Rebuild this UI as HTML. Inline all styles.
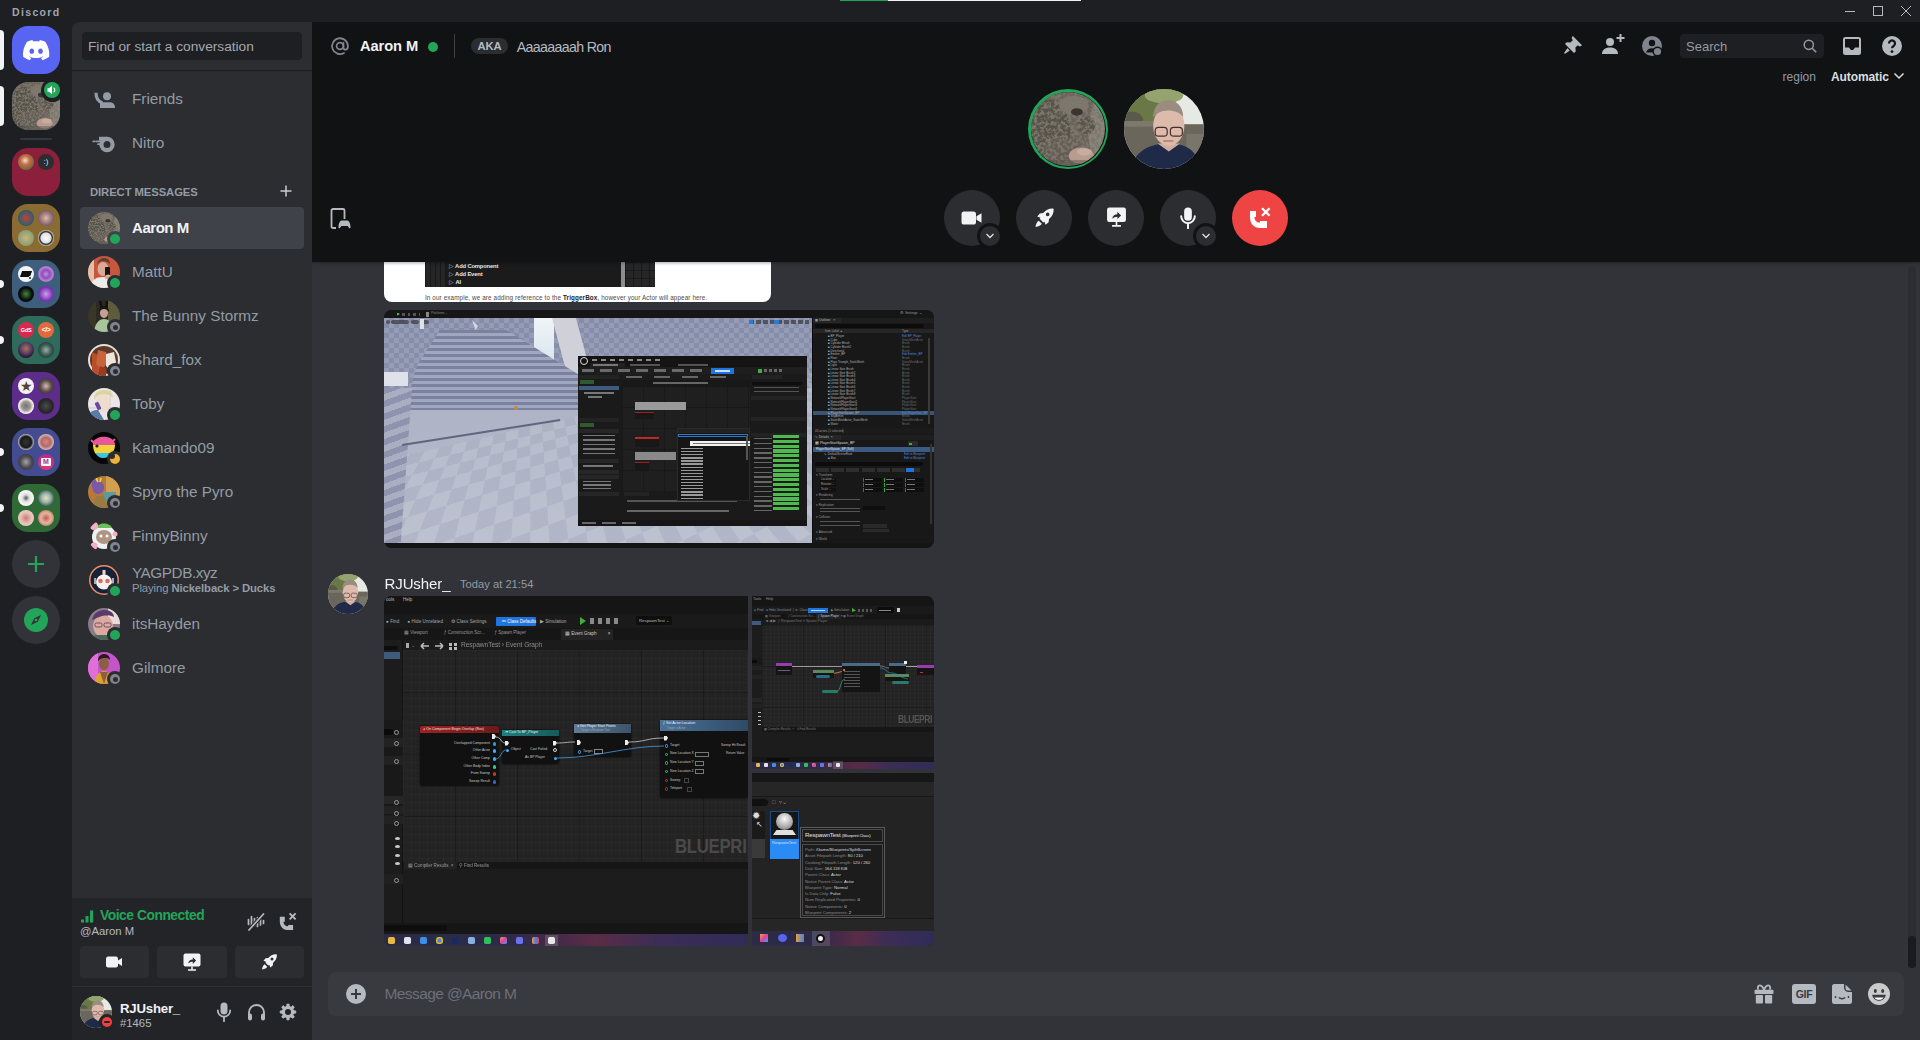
<!DOCTYPE html>
<html><head><meta charset="utf-8">
<style>
*{box-sizing:border-box;margin:0;padding:0}
html,body{width:1920px;height:1040px;overflow:hidden}
body{background:#1e1f22;position:relative;font-family:"Liberation Sans",sans-serif;color:#dbdee1}
.a{position:absolute}
.t{position:absolute;white-space:nowrap;line-height:1}
.srv{position:absolute;left:12px;width:48px;height:48px;border-radius:16px;overflow:hidden}
.mini{position:absolute;width:16px;height:16px;border-radius:50%}
.pill{position:absolute;left:0;width:4px;background:#f2f3f5;border-radius:0 4px 4px 0}
.dm{position:absolute;left:80px;width:224px;height:42px;border-radius:4px}
.av{position:absolute;left:8px;top:5px;width:32px;height:32px;border-radius:50%}
.st{position:absolute;left:25px;top:22px;width:16px;height:16px;border-radius:50%;background:#2b2d31}
.st i{position:absolute;left:3px;top:3px;width:10px;height:10px;border-radius:50%;display:block}
.on i{background:#23a559}
.off i{background:#80848e}
.off i:after{content:"";position:absolute;left:2.5px;top:2.5px;width:5px;height:5px;border-radius:50%;background:#2b2d31}
.dmn{position:absolute;left:52px;top:13px;font-size:16px;color:#949ba4;white-space:nowrap;line-height:1}
.cbtn{position:absolute;top:190px;width:56px;height:56px;border-radius:50%;background:#2b2d31}
</style></head>
<body>
<svg width="0" height="0" style="position:absolute">
 <defs>
  <filter id="tex" x="0" y="0" width="100%" height="100%">
    <feTurbulence type="fractalNoise" baseFrequency="0.22" numOctaves="3" seed="7" result="n"/>
    <feColorMatrix in="n" type="matrix" values="0 0 0 0 0.2  0 0 0 0 0.18  0 0 0 0 0.15  0 0 0 4.5 -1.9" result="m"/>
    <feComposite in="m" in2="SourceGraphic" operator="in" result="c"/>
    <feMerge><feMergeNode in="SourceGraphic"/><feMergeNode in="c"/></feMerge>
  </filter>
  <symbol id="av1" viewBox="0 0 100 100">
    <g filter="url(#tex)">
    <rect width="100" height="100" fill="#6a645a"/>
    <ellipse cx="25" cy="55" rx="28" ry="45" fill="#57524a"/>
    <ellipse cx="90" cy="55" rx="12" ry="40" fill="#8a857b"/>
    <ellipse cx="58" cy="18" rx="20" ry="13" fill="#7e786d"/>
    <ellipse cx="75" cy="45" rx="12" ry="12" fill="#5a544b"/>
    <ellipse cx="40" cy="78" rx="26" ry="18" fill="#635d54"/>
    </g>
    <ellipse cx="62" cy="27" rx="8" ry="5" fill="#3a3530"/>
    <ellipse cx="68" cy="86" rx="17" ry="11" fill="#b89c90"/>
    <ellipse cx="72" cy="81" rx="10" ry="5" fill="#c8ac9e"/>
    <rect x="0" y="92" width="100" height="8" fill="#5a554e" opacity=".5"/>
  </symbol>
  <symbol id="av2" viewBox="0 0 100 100">
    <rect width="100" height="100" fill="#e6e9e4"/>
    <path d="M0 0h72c-2 12-10 22-22 26L32 45 0 52z" fill="#74824f"/>
    <ellipse cx="25" cy="25" rx="30" ry="22" fill="#6a7848"/>
    <ellipse cx="50" cy="8" rx="24" ry="10" fill="#95a36e"/>
    <ellipse cx="10" cy="40" rx="14" ry="12" fill="#5a5a4a"/>
    <rect x="0" y="44" width="100" height="45" fill="#6b665b"/>
    <rect x="0" y="40" width="40" height="7" fill="#7e796d"/>
    <rect x="78" y="56" width="22" height="30" fill="#7a756a"/>
    <path d="M8 100c6-22 22-32 48-32s36 12 40 32z" fill="#1f2a48"/>
    <path d="M42 68l14 10 14-10" fill="#d0ae9e"/>
    <ellipse cx="56" cy="46" rx="19.5" ry="25" fill="#dcbaac"/>
    <path d="M36 36c1-14 8-22 19-22s19 8 19 21c-4-5-10-8-19-8s-15 4-19 9z" fill="#9a8c7e"/>
    <rect x="39" y="48" width="15" height="11" rx="4" fill="none" stroke="#4a2e2c" stroke-width="1.5"/>
    <rect x="58" y="48" width="15" height="11" rx="4" fill="none" stroke="#4a2e2c" stroke-width="1.5"/>
    <path d="M49 65h13" stroke="#b07a70" stroke-width="1.6"/>
  </symbol>
 </defs>
</svg>

<!-- TITLE BAR -->
<div class="a" style="left:0;top:0;width:1920px;height:22px;background:#1e1f22">
  <div class="t" style="left:12px;top:7px;font-size:10.5px;font-weight:bold;color:#a0a5ad;letter-spacing:1.35px">Discord</div>
  <div class="a" style="left:840px;top:0;width:48px;height:1px;background:#23a559"></div>
  <div class="a" style="left:888px;top:0;width:193px;height:1px;background:#f2f3f5"></div>
  <svg class="a" style="left:1840px;top:0" width="80" height="22" viewBox="0 0 80 22">
    <line x1="5" y1="11.5" x2="15" y2="11.5" stroke="#b5bac1" stroke-width="1"/>
    <rect x="33.5" y="6.5" width="9" height="9" fill="none" stroke="#b5bac1" stroke-width="1"/>
    <path d="M61 6 L71 16 M71 6 L61 16" stroke="#b5bac1" stroke-width="1"/>
  </svg>
</div>

<!-- SERVER RAIL -->
<div id="rail" class="a" style="left:0;top:22px;width:72px;height:1018px;background:#1e1f22">
  <div class="pill" style="top:8px;height:40px"></div>
  <div class="srv" style="top:4px;background:#5865f2">
    <svg class="a" style="left:9.7px;top:10px" width="28.3" height="28.3" viewBox="0 0 24 24"><path fill="#fff" d="M19.73 4.87a18.2 18.2 0 0 0-4.6-1.44c-.21.4-.4.8-.58 1.21-1.69-.25-3.4-.25-5.1 0-.18-.41-.37-.82-.59-1.2-1.6.27-3.14.75-4.6 1.43A19.04 19.04 0 0 0 .96 17.7a18.43 18.43 0 0 0 5.63 2.87c.46-.62.86-1.28 1.2-1.98-.65-.25-1.29-.55-1.9-.92.17-.12.32-.24.47-.37 3.58 1.7 7.7 1.7 11.28 0l.46.37c-.6.36-1.25.67-1.9.92.35.7.75 1.35 1.2 1.98 2.03-.63 3.94-1.6 5.64-2.87.47-4.87-.78-9.09-3.3-12.83ZM8.3 15.12c-1.1 0-2-1.02-2-2.27 0-1.24.88-2.26 2-2.26s2.02 1.02 2 2.26c0 1.25-.89 2.27-2 2.27Zm7.4 0c-1.1 0-2-1.02-2-2.27 0-1.24.88-2.26 2-2.26s2.02 1.02 2 2.26c0 1.25-.88 2.27-2 2.27Z"/></svg>
  </div>
  <div class="pill" style="top:64px;height:40px"></div>
  <div class="srv" style="top:60px"><svg width="48" height="48"><use href="#av1"/></svg></div>
  <div class="a" style="left:40.5px;top:56.5px;width:23px;height:23px;border-radius:50%;background:#1e1f22"></div>
  <div class="a" style="left:44px;top:60px;width:16px;height:16px;border-radius:50%;background:#23a559">
    <svg class="a" style="left:2px;top:2px" width="12" height="12" viewBox="0 0 12 12"><path fill="#fff" d="M1.5 4.2h1.6L6 1.8v8.4L3.1 7.8H1.5z"/><path d="M7.6 3.8a2.6 2.6 0 0 1 0 4.4" stroke="#fff" stroke-width="1.1" fill="none"/></svg>
  </div>
  <div class="a" style="left:20px;top:116px;width:32px;height:2px;border-radius:1px;background:#35363c"></div>

  <!-- folder red -->
  <div class="srv" style="top:126px;background:#8b1f3c">
    <div class="mini" style="left:6px;top:6px;background:radial-gradient(circle at 45% 40%,#e9e2d8 0%,#c96a3e 35%,#566b45 80%)"></div>
    <div class="mini" style="left:26px;top:6px;background:#2b2d31;color:#dbdee1;font-size:8px;text-align:center;line-height:16px">:)</div>
  </div>
  <!-- folder gold -->
  <div class="srv" style="top:182px;background:#8a6c33">
    <div class="mini" style="left:6px;top:6px;background:radial-gradient(circle at 50% 50%,#c0413a 0%,#3a5d6a 60%,#1f3844 100%)"></div>
    <div class="mini" style="left:26px;top:6px;background:radial-gradient(circle at 50% 50%,#e0b9a5 0%,#7a5a6a 70%,#a89ab8 100%)"></div>
    <div class="mini" style="left:6px;top:26px;background:radial-gradient(circle at 50% 50%,#c6b77a 0%,#8a9d75 70%,#6b8c6a 100%)"></div>
    <div class="mini" style="left:26px;top:26px;background:radial-gradient(circle,#fff 0%,#ddd 45%,#222 55%,#fff 75%)"></div>
  </div>
  <!-- folder blue -->
  <div class="pill" style="top:258px;height:8px"></div>
  <div class="srv" style="top:238px;background:#3e5e7d">
    <div class="mini" style="left:6px;top:6px;background:#f5f5f5"><div class="a" style="left:3px;top:5px;width:10px;height:6px;background:#111;transform:skewX(-20deg)"></div><div class="a" style="left:10px;top:10px;width:4px;height:4px;border-radius:50%;background:#111;border:1px solid #fff"></div></div>
    <div class="mini" style="left:26px;top:6px;background:radial-gradient(circle,#c98fe0 0%,#8d4fb6 35%,#b77fd6 60%,#7a3ea6 100%)"></div>
    <div class="mini" style="left:6px;top:26px;background:radial-gradient(circle,#3c8a3a 0%,#0b0b0b 55%)"></div>
    <div class="mini" style="left:26px;top:26px;background:radial-gradient(circle,#c9a0e6 0%,#7b33b5 60%,#5c2390 100%)"></div>
  </div>
  <!-- folder teal -->
  <div class="pill" style="top:314px;height:8px"></div>
  <div class="srv" style="top:294px;background:#2f6b5b">
    <div class="mini" style="left:6px;top:6px;background:#d72a4e;color:#fff;font-size:5.5px;font-weight:bold;text-align:center;line-height:16px;letter-spacing:-0.2px">GdS</div>
    <div class="mini" style="left:26px;top:6px;background:#e4673d;color:#fff;font-size:7px;font-weight:bold;text-align:center;line-height:16px;letter-spacing:-0.6px">&lt;/&gt;</div>
    <div class="mini" style="left:6px;top:26px;background:radial-gradient(circle at 50% 40%,#a87850 0%,#5a3a6a 45%,#151515 80%)"></div>
    <div class="mini" style="left:26px;top:26px;background:radial-gradient(circle,#9ab0aa 0%,#3a5750 50%,#1a2a28 100%)"></div>
  </div>
  <!-- folder purple -->
  <div class="srv" style="top:350px;background:#5d2d8c">
    <div class="mini" style="left:6px;top:6px;background:#f3f3f3;color:#5a4034;font-size:14px;text-align:center;line-height:16px">&#9733;</div>
    <div class="mini" style="left:26px;top:6px;background:radial-gradient(circle,#d9b9b2 0%,#5a4a4e 50%,#2a2226 100%)"></div>
    <div class="mini" style="left:6px;top:26px;background:radial-gradient(circle,#5d7a8a 0%,#a8988a 40%,#f4f4f4 65%)"></div>
    <div class="mini" style="left:26px;top:26px;background:radial-gradient(circle,#4a4a4a 0%,#262626 60%)"></div>
  </div>
  <!-- folder indigo -->
  <div class="pill" style="top:426px;height:8px"></div>
  <div class="srv" style="top:406px;background:#434c91">
    <div class="mini" style="left:6px;top:6px;background:radial-gradient(circle,#333 0%,#1a1a1a 50%,#bbb 70%,#111 85%)"></div>
    <div class="mini" style="left:26px;top:6px;background:radial-gradient(circle,#d98a80 0%,#b06a6a 40%,#e7d3cf 80%)"></div>
    <div class="mini" style="left:6px;top:26px;background:radial-gradient(circle,#a9a5a8 0%,#4e4a52 50%,#2c2a32 100%)"></div>
    <div class="mini" style="left:26px;top:26px;background:linear-gradient(180deg,#b02a9a,#e03a6a);"><div class="a" style="left:3px;top:4px;width:10px;height:8px;background:#fff;border-radius:1px;color:#b02a7a;font-size:7px;font-weight:bold;line-height:8px;text-align:center">M</div></div>
  </div>
  <!-- folder green -->
  <div class="pill" style="top:482px;height:8px"></div>
  <div class="srv" style="top:462px;background:#2f6a36">
    <div class="mini" style="left:6px;top:6px;background:radial-gradient(circle,#555 0%,#ddd 30%,#f6f6f6 60%)"></div>
    <div class="mini" style="left:26px;top:6px;background:radial-gradient(circle,#e8e0b8 0%,#9bb7a8 40%,#2e3f4e 85%)"></div>
    <div class="mini" style="left:6px;top:26px;background:radial-gradient(circle,#c77a78 0%,#e6bdb2 45%,#efe0d8 100%)"></div>
    <div class="mini" style="left:26px;top:26px;background:radial-gradient(circle,#c25a55 0%,#e8b6a0 45%,#8a5a40 100%)"></div>
  </div>
  <!-- add -->
  <div class="srv" style="top:518px;background:#313338;border-radius:50%">
    <svg class="a" style="left:12px;top:12px" width="24" height="24" viewBox="0 0 24 24"><path d="M12 4v16M4 12h16" stroke="#23a559" stroke-width="2.2"/></svg>
  </div>
  <!-- explore -->
  <div class="srv" style="top:574px;background:#313338;border-radius:50%">
    <div class="a" style="left:12px;top:12px;width:24px;height:24px;border-radius:50%;background:#23a559"></div>
    <svg class="a" style="left:12px;top:12px" width="24" height="24" viewBox="0 0 24 24"><path d="M17 7l-3.2 6.8L7 17l3.2-6.8z" fill="#313338"/><circle cx="12" cy="12" r="1.3" fill="#23a559"/></svg>
  </div>
</div>

<!-- DM SIDEBAR -->
<div id="side" class="a" style="left:72px;top:22px;width:240px;height:1018px;background:#2b2d31;border-top-left-radius:8px;overflow:hidden">
<div class="a" style="left:0;top:0;width:240px;height:48px;box-shadow:0 1px 0 rgba(2,2,2,.2),0 1.5px 0 rgba(6,6,7,.05),0 2px 0 rgba(2,2,2,.05)"></div>
<div class="a" style="left:10px;top:10px;width:220px;height:28px;border-radius:4px;background:#1e1f22"><div class="t" style="left:6px;top:8px;font-size:13.7px;color:#a4a8ae">Find or start a conversation</div></div>
<svg class="a" style="left:22px;top:70px" width="22" height="18" viewBox="0 0 22 18"><path d="M2 0.8C2 6.5 4 9.6 8.5 10.8" fill="none" stroke="#949ba4" stroke-width="3.2"/><circle cx="13" cy="4.2" r="4" fill="#949ba4"/><path d="M6 10.3h10c2.8 0 5 2.2 5 5V16H6z" fill="#949ba4"/></svg>
<div class="t" style="left:60px;top:69px;font-size:15.3px;color:#949ba4">Friends</div>
<svg class="a" style="left:92px;top:135px;left:20px;top:113px" width="26" height="20" viewBox="0 0 26 20"><circle cx="15" cy="9.5" r="5.6" fill="none" stroke="#949ba4" stroke-width="4.2"/><path d="M7 1.8h8v3.8H7z" fill="#949ba4"/><path d="M1.2 6.3h1.6M4.5 6.3h4M6 9.2h3" stroke="#949ba4" stroke-width="1.7" stroke-linecap="round"/></svg>
<div class="t" style="left:60px;top:113px;font-size:15.3px;color:#949ba4;font-weight:400">Nitro</div>
<div class="t" style="left:18px;top:164.5px;font-size:11.3px;font-weight:bold;color:#949ba4;letter-spacing:-0.1px">DIRECT MESSAGES</div>
<svg class="a" style="left:208px;top:163px" width="12" height="12" viewBox="0 0 12 12"><path d="M6 0.5v11M0.5 6h11" stroke="#c9cdd3" stroke-width="1.5"/></svg>
<div class="dm" style="left:8px;top:185px;background:#404249"><svg class="av" width="32" height="32"><use href="#av1"/></svg><div class="a" style="left:27px;top:24px;width:16px;height:16px;border-radius:50%;background:#404249"><div class="a" style="left:3px;top:3px;width:10px;height:10px;border-radius:50%;background:#23a559"></div></div><div class="t" style="left:52px;top:12.5px;font-size:15px;color:#f2f3f5;font-weight:bold;letter-spacing:-0.45px">Aaron M</div></div>
<div class="dm" style="left:8px;top:229px;"><svg class="av" width="32" height="32" viewBox="0 0 32 32"><rect width="32" height="32" fill="#c4573d"/><rect x="0" y="0" width="6" height="32" fill="#e0c0a8"/><path d="M2 32c1-8 6-11 13-11s11 4 12 11z" fill="#ececea"/><ellipse cx="15" cy="13" rx="5.5" ry="7" fill="#d9aa98"/><path d="M9 9c1-5 4-7 7-7s6 2 6 6c-2-2-4-3-7-3s-5 2-6 4z" fill="#5a4036"/><rect x="17" y="11" width="5" height="9" rx="1" fill="#151515"/><ellipse cx="20" cy="21" rx="3" ry="2.5" fill="#d9aa98"/></svg><div class="a" style="left:27px;top:24px;width:16px;height:16px;border-radius:50%;background:#2b2d31"><div class="a" style="left:3px;top:3px;width:10px;height:10px;border-radius:50%;background:#23a559"></div></div><div class="t" style="left:52px;top:12.5px;font-size:15.3px;color:#949ba4;font-weight:400;">MattU</div></div>
<div class="dm" style="left:8px;top:273px;"><svg class="av" width="32" height="32" viewBox="0 0 32 32"><rect width="32" height="32" fill="#2c2a22"/><rect x="20" y="0" width="12" height="32" fill="#5e5c3c"/><rect x="0" y="0" width="8" height="32" fill="#3a3628"/><path d="M12 1l2 8M19 1l-1 8" stroke="#111" stroke-width="2.5"/><ellipse cx="16" cy="13" rx="4" ry="5" fill="#c8a090"/><path d="M11 12c0-4 2-6 5-6s5 2 5 6c-1-2-3-3-5-3s-4 1-5 3z" fill="#1a1412"/><path d="M6 32c1-9 5-13 10-13s9 4 10 13z" fill="#a8c49a"/></svg><div class="a" style="left:27px;top:24px;width:16px;height:16px;border-radius:50%;background:#2b2d31"><div class="a" style="left:3px;top:3px;width:10px;height:10px;border-radius:50%;background:#80848e"></div><div class="a" style="left:5.5px;top:5.5px;width:5px;height:5px;border-radius:50%;background:#2b2d31"></div></div><div class="t" style="left:52px;top:12.5px;font-size:15.3px;color:#949ba4;font-weight:400;">The Bunny Stormz</div></div>
<div class="dm" style="left:8px;top:317px;"><svg class="av" width="32" height="32" viewBox="0 0 32 32"><rect width="32" height="32" fill="#e6e0d8"/><circle cx="16" cy="16" r="14" fill="#5a3a2a"/><path d="M4 8l8 4 4 20H4z" fill="#b84e2a"/><path d="M10 6l8 2 2 10-6 8-6-6z" fill="#c8643a"/><path d="M18 10l8-2 2 10-4 10-6-6z" fill="#ece6dc"/><path d="M12 22l6 2 0 8h-8z" fill="#9a3a20"/></svg><div class="a" style="left:27px;top:24px;width:16px;height:16px;border-radius:50%;background:#2b2d31"><div class="a" style="left:3px;top:3px;width:10px;height:10px;border-radius:50%;background:#80848e"></div><div class="a" style="left:5.5px;top:5.5px;width:5px;height:5px;border-radius:50%;background:#2b2d31"></div></div><div class="t" style="left:52px;top:12.5px;font-size:15.3px;color:#949ba4;font-weight:400;">Shard_fox</div></div>
<div class="dm" style="left:8px;top:361px;"><svg class="av" width="32" height="32" viewBox="0 0 32 32"><rect width="32" height="32" fill="#eae6e8"/><path d="M22 0v32M0 20h32" stroke="#c8c0c8" stroke-width=".8"/><path d="M0 32c0-8 4-10 10-10l6 10z" fill="#5a7aaa"/><ellipse cx="15" cy="15" rx="7" ry="9" fill="#eedccc"/><path d="M6 12c0-7 4-10 10-10s9 3 9 8c-3-3-6-4-10-4s-7 3-9 6z" fill="#dcd49c"/><rect x="8" y="14" width="4" height="8" rx="1" transform="rotate(-25 10 18)" fill="#6a4aa0"/></svg><div class="a" style="left:27px;top:24px;width:16px;height:16px;border-radius:50%;background:#2b2d31"><div class="a" style="left:3px;top:3px;width:10px;height:10px;border-radius:50%;background:#23a559"></div></div><div class="t" style="left:52px;top:12.5px;font-size:15.3px;color:#949ba4;font-weight:400;">Toby</div></div>
<div class="dm" style="left:8px;top:405px;"><svg class="av" width="32" height="32" viewBox="0 0 32 32"><rect width="32" height="32" fill="#050505"/><path d="M5 10c2-4 8-6 14-5 5 1 8 4 8 8H5z" fill="#e8589a"/><path d="M5 13h22c0 3-1 6-3 8H7c-1-2-2-5-2-8z" fill="#f2d43a"/><path d="M7 21h17c-2 3-5 5-9 5-3 0-6-2-8-5z" fill="#3cc4e2"/><circle cx="9" cy="14" r="1.6" fill="#222"/><path d="M3 8l3 3M27 7l-3 3" stroke="#e8589a" stroke-width="2"/></svg><div class="a" style="left:27px;top:24px;width:16px;height:16px;border-radius:50%;background:#2b2d31"><div class="a" style="left:3px;top:3px;width:10px;height:10px;border-radius:50%;background:#f0b232"></div><div class="a" style="left:2px;top:2px;width:6px;height:6px;border-radius:50%;background:#2b2d31"></div></div><div class="t" style="left:52px;top:12.5px;font-size:15.3px;color:#949ba4;font-weight:400;">Kamando09</div></div>
<div class="dm" style="left:8px;top:449px;"><svg class="av" width="32" height="32" viewBox="0 0 32 32"><rect width="32" height="32" fill="#b8783a"/><rect x="18" y="0" width="14" height="20" fill="#d0a050"/><path d="M4 4c4-2 10 0 12 6 1 4-2 8-6 8-4 0-7-4-6-14z" fill="#7a5aa8"/><path d="M8 2l2 4M13 2l-1 4" stroke="#e8d040" stroke-width="1.8"/><path d="M16 16h12v10h-12z" fill="#5a9aa0"/><path d="M4 32l4-12h8l4 12z" fill="#9a7a40"/></svg><div class="a" style="left:27px;top:24px;width:16px;height:16px;border-radius:50%;background:#2b2d31"><div class="a" style="left:3px;top:3px;width:10px;height:10px;border-radius:50%;background:#80848e"></div><div class="a" style="left:5.5px;top:5.5px;width:5px;height:5px;border-radius:50%;background:#2b2d31"></div></div><div class="t" style="left:52px;top:12.5px;font-size:15.3px;color:#949ba4;font-weight:400;">Spyro the Pyro</div></div>
<div class="dm" style="left:8px;top:493px;"><svg class="av" width="32" height="32" viewBox="0 0 32 32"><rect width="32" height="32" fill="#2b2d31"/><circle cx="16" cy="17" r="12" fill="#eef2f2"/><path d="M8 8c2-6 14-6 16 0z" fill="#6ac05a"/><ellipse cx="16" cy="17" rx="8" ry="7" fill="#b09484"/><circle cx="13" cy="16" r="1.5" fill="#fff"/><circle cx="19" cy="16" r="1.5" fill="#fff"/><circle cx="6" cy="6" r="4" fill="#f2b0c0"/><circle cx="6" cy="26" r="3.5" fill="#f2b0c0"/><circle cx="27" cy="14" r="2.5" fill="#f2b0c0"/></svg><div class="a" style="left:27px;top:24px;width:16px;height:16px;border-radius:50%;background:#2b2d31"><div class="a" style="left:3px;top:3px;width:10px;height:10px;border-radius:50%;background:#80848e"></div><div class="a" style="left:5.5px;top:5.5px;width:5px;height:5px;border-radius:50%;background:#2b2d31"></div></div><div class="t" style="left:52px;top:12.5px;font-size:15.3px;color:#949ba4;font-weight:400;">FinnyBinny</div></div>
<div class="dm" style="left:8px;top:537px;"><svg class="av" width="32" height="32" viewBox="0 0 32 32"><rect width="32" height="32" fill="#2b2d31"/><circle cx="16" cy="16" r="15" fill="#e8906a"/><circle cx="16" cy="16" r="13.5" fill="#182038"/><ellipse cx="16" cy="18" rx="8" ry="7.5" fill="#f2f2f2"/><circle cx="12.5" cy="17" r="2.3" fill="#e06a60"/><circle cx="19.5" cy="17" r="2.3" fill="#e06a60"/><rect x="14.5" y="6" width="3" height="5" fill="#e8d8c0"/><path d="M6 14h2v6H6zM24 14h2v6h-2z" fill="#aaa"/></svg><div class="a" style="left:27px;top:24px;width:16px;height:16px;border-radius:50%;background:#2b2d31"><div class="a" style="left:3px;top:3px;width:10px;height:10px;border-radius:50%;background:#23a559"></div></div><div class="t" style="left:52px;top:5.5px;font-size:15.3px;color:#949ba4;letter-spacing:-0.45px">YAGPDB.xyz</div><div class="t" style="left:52px;top:23.5px;font-size:11.3px;color:#949ba4;letter-spacing:-0.1px">Playing <b>Nickelback &gt; Ducks</b></div></div>
<div class="dm" style="left:8px;top:581px;"><svg class="av" width="32" height="32" viewBox="0 0 32 32"><rect width="32" height="32" fill="#8a7a8a"/><rect x="20" y="0" width="12" height="16" fill="#e8dcd8"/><ellipse cx="15" cy="18" rx="10" ry="11" fill="#dcaaa0"/><path d="M4 12c2-8 8-10 13-10s9 3 9 7c-4-2-8-2-12-1-4 1-7 3-10 4z" fill="#5a3a6a"/><rect x="7" y="15" width="7" height="4" rx="1.5" fill="none" stroke="#6a5060" stroke-width="1"/><rect x="16" y="15" width="7" height="4" rx="1.5" fill="none" stroke="#6a5060" stroke-width="1"/><path d="M0 32c2-4 6-5 10-5h12c4 0 8 1 10 5z" fill="#4a6a5a"/></svg><div class="a" style="left:27px;top:24px;width:16px;height:16px;border-radius:50%;background:#2b2d31"><div class="a" style="left:3px;top:3px;width:10px;height:10px;border-radius:50%;background:#23a559"></div></div><div class="t" style="left:52px;top:12.5px;font-size:15.3px;color:#949ba4;font-weight:400;">itsHayden</div></div>
<div class="dm" style="left:8px;top:625px;"><svg class="av" width="32" height="32" viewBox="0 0 32 32"><rect width="32" height="32" fill="#c454c8"/><rect x="0" y="0" width="10" height="32" fill="#e070d8"/><ellipse cx="16" cy="12" rx="5" ry="6" fill="#8a6040"/><path d="M10 9c0-5 3-7 6-7s6 2 6 6c-2-2-4-2-6-2s-4 1-6 3z" fill="#2a1a1a"/><path d="M6 32c1-8 5-13 10-13s9 5 10 13z" fill="#e0a030"/><path d="M12 20l4 12 4-12z" fill="#8a6040"/></svg><div class="a" style="left:27px;top:24px;width:16px;height:16px;border-radius:50%;background:#2b2d31"><div class="a" style="left:3px;top:3px;width:10px;height:10px;border-radius:50%;background:#80848e"></div><div class="a" style="left:5.5px;top:5.5px;width:5px;height:5px;border-radius:50%;background:#2b2d31"></div></div><div class="t" style="left:52px;top:12.5px;font-size:15.3px;color:#949ba4;font-weight:400;">Gilmore</div></div>

<!-- VOICE PANEL -->
<div class="a" style="left:0;top:876px;width:240px;height:142px;background:#232428">
  <svg class="a" style="left:9px;top:12px" width="14" height="13" viewBox="0 0 14 13"><rect x="0" y="9.5" width="3" height="3" fill="#23a559"/><rect x="4.5" y="6" width="3" height="6.5" fill="#23a559"/><rect x="9" y="0.5" width="3.2" height="12" fill="#23a559"/></svg>
  <div class="t" style="left:28px;top:10.5px;font-size:13.8px;font-weight:bold;color:#23a559;letter-spacing:-0.45px">Voice Connected</div>
  <div class="t" style="left:8px;top:27.5px;font-size:11.3px;color:#b5bac1">@Aaron M</div>
  <svg class="a" style="left:175px;top:15px" width="18" height="18" viewBox="0 0 18 18"><g stroke="#b5bac1" stroke-width="1.7" stroke-linecap="round"><path d="M1.5 6.5v5M4.5 3.5v11M7.5 5.5v7M10.5 4.5v9M13.5 6v6M16.5 7.5v3"/></g><path d="M16.5 1L2 17" stroke="#232428" stroke-width="3.6"/><path d="M16.5 1L2 17" stroke="#b5bac1" stroke-width="1.7" stroke-linecap="round"/></svg>
  <svg class="a" style="left:204px;top:12px" width="24" height="24" viewBox="0 0 24 24"><path fill="#b5bac1" d="M3.8 6.7h5v5H7.5c0 2.8 1.9 4.6 4.6 4.6v-1.3h5v5h-5c-5 0-8.3-3.7-8.3-8.6z"/><path d="M13.6 3.4l6 6M19.6 3.4l-6 6" stroke="#b5bac1" stroke-width="1.9"/></svg>
  <div class="a" style="left:8px;top:48px;width:69px;height:32px;border-radius:4px;background:#2b2d31">
    <svg class="a" style="left:25px;top:8px" width="19" height="16" viewBox="0 0 19 16"><rect x="1" y="2.5" width="12" height="11" rx="2.2" fill="#f2f3f5"/><path d="M13 6.5l4-2.5v8l-4-2.5z" fill="#f2f3f5"/></svg>
  </div>
  <div class="a" style="left:85px;top:48px;width:70px;height:32px;border-radius:4px;background:#2b2d31">
    <svg class="a" style="left:26px;top:7px" width="18" height="18" viewBox="0 0 18 18"><rect x="0.5" y="0.5" width="17" height="13" rx="2" fill="#f2f3f5"/><path d="M9 13.5v3M5 17h8" stroke="#f2f3f5" stroke-width="1.5"/><path d="M5.2 10.5c.3-2.6 2-4 4.6-4V4.3l3.3 3.3-3.3 3.3V8.7c-1.9 0-3.4.6-4.6 1.8z" fill="#2b2d31"/></svg>
  </div>
  <div class="a" style="left:163px;top:48px;width:69px;height:32px;border-radius:4px;background:#2b2d31">
    <svg class="a" style="left:25px;top:7px" width="18" height="18" viewBox="0 0 18 18"><path fill="#f2f3f5" d="M16.3 1.2c-3.2-.2-6 1.3-8 3.8L5.6 5.3 3.5 7.8l2.6.9-.6 1 2.9 2.9 1-.6.9 2.6 2.5-2.1.3-2.7c2.5-2 4-4.8 3.8-8 0-.4-.3-.6-.6-.6zM12 7.6a1.5 1.5 0 1 1 0-3 1.5 1.5 0 0 1 0 3z"/><path fill="#f2f3f5" d="M4.7 11.2c-1.3.5-2.3 2.5-2.7 5.2 2.7-.4 4.7-1.4 5.2-2.7z"/></svg>
  </div>
  <div class="a" style="left:0;top:87.5px;width:240px;height:1px;background:#2e2f34"></div>
  <!-- user -->
  <svg class="a" style="left:8px;top:98px;border-radius:50%" width="32" height="32"><use href="#av2"/></svg>
  <div class="a" style="left:27px;top:116px;width:16px;height:16px;border-radius:50%;background:#232428"><div class="a" style="left:3px;top:3px;width:10px;height:10px;border-radius:50%;background:#f23f43"></div><div class="a" style="left:5px;top:7px;width:6px;height:2px;background:#232428;border-radius:1px"></div></div>
  <div class="t" style="left:48px;top:104px;font-size:13.2px;font-weight:bold;color:#f2f3f5;letter-spacing:-0.2px">RJUsher_</div>
  <div class="t" style="left:48px;top:119.5px;font-size:11.3px;color:#b5bac1">#1465</div>
  <svg class="a" style="left:144px;top:104px" width="16" height="20" viewBox="0 0 16 20"><rect x="4.5" y="0.5" width="7" height="12" rx="3.5" fill="#b5bac1"/><path d="M1.8 8.5a6.2 6.2 0 0 0 12.4 0" fill="none" stroke="#b5bac1" stroke-width="1.8" stroke-linecap="round"/><path d="M8 14.8v4.5" stroke="#b5bac1" stroke-width="1.8" stroke-linecap="round"/></svg>
  <svg class="a" style="left:175px;top:105px" width="19" height="18" viewBox="0 0 19 18"><path d="M2 14V9.5a7.5 7.5 0 0 1 15 0V14" fill="none" stroke="#b5bac1" stroke-width="1.9"/><rect x="1" y="10.5" width="4" height="7" rx="2" fill="#b5bac1"/><rect x="14" y="10.5" width="4" height="7" rx="2" fill="#b5bac1"/></svg>
  <svg class="a" style="left:207px;top:105px" width="18" height="18" viewBox="0 0 24 24"><path fill="#b5bac1" d="M10.56 1.1c-.46.05-.7.53-.64.98.18 1.16-.19 2.2-.98 2.53-.8.33-1.79-.15-2.49-1.1-.27-.36-.78-.52-1.14-.24-.77.59-1.45 1.27-2.04 2.04-.28.36-.12.87.24 1.14.96.7 1.43 1.7 1.1 2.49-.33.8-1.37 1.16-2.53.98-.45-.07-.93.18-.99.64a11.1 11.1 0 0 0 0 2.88c.06.46.54.7.99.64 1.16-.18 2.2.19 2.53.98.33.8-.14 1.79-1.1 2.49-.36.27-.52.78-.24 1.14.59.77 1.27 1.45 2.04 2.04.36.28.87.12 1.14-.24.7-.95 1.7-1.43 2.49-1.1.8.33 1.16 1.37.98 2.53-.07.45.18.93.64.99.95.12 1.93.12 2.88 0 .46-.06.7-.54.64-.99-.18-1.16.19-2.2.98-2.53.8-.33 1.79.14 2.49 1.1.27.36.78.52 1.14.24.77-.59 1.45-1.27 2.04-2.04.28-.36.12-.87-.24-1.14-.96-.7-1.43-1.7-1.1-2.49.33-.8 1.37-1.16 2.53-.98.45.07.93-.18.99-.64.12-.95.12-1.93 0-2.88-.06-.46-.54-.7-.99-.64-1.16.18-2.2-.19-2.53-.98-.33-.8.14-1.79 1.1-2.49.36-.27.52-.78.24-1.14a11.07 11.07 0 0 0-2.04-2.04c-.36-.28-.87-.12-1.14.24-.7.96-1.7 1.43-2.49 1.1-.8-.33-1.16-1.37-.98-2.53.07-.45-.18-.93-.64-.99a11.1 11.1 0 0 0-2.88 0ZM16 12a4 4 0 1 1-8 0 4 4 0 0 1 8 0Z"/></svg>
</div>
</div>

<!-- MAIN -->
<div id="main" class="a" style="left:312px;top:22px;width:1608px;height:1018px;background:#313338;overflow:hidden">
  <!-- CHAT CONTENT -->
  <div id="img1" class="a" style="left:72px;top:200px;width:387px;height:80px;background:#fff;border-radius:0 0 8px 8px;overflow:hidden">
    <div class="a" style="left:41px;top:0;width:230px;height:64.5px;background:#1b1b1b"></div>
    <div class="a" style="left:41px;top:0;width:21px;height:64.5px;background:#262626;background-image:linear-gradient(90deg,rgba(0,0,0,.35) 1px,transparent 1px);background-size:5px 5px"></div>
    <div class="a" style="left:241px;top:0;width:30px;height:64.5px;background:#262626;background-image:linear-gradient(90deg,rgba(0,0,0,.35) 1px,transparent 1px),linear-gradient(rgba(0,0,0,.25) 1px,transparent 1px);background-size:8px 8px"></div>
    <div class="a" style="left:236.5px;top:0;width:4.5px;height:64.5px;background:#8d8d8d"></div>
    <div class="t" style="left:65px;top:41.5px;font-size:5.8px;font-weight:bold;color:#e8e8e8;letter-spacing:-0.15px"><span style="font-weight:normal;color:#bbb">&#9655;</span> Add Component</div>
    <div class="t" style="left:65px;top:49.5px;font-size:5.8px;font-weight:bold;color:#e8e8e8;letter-spacing:-0.15px"><span style="font-weight:normal;color:#bbb">&#9655;</span> Add Event</div>
    <div class="t" style="left:65px;top:57.5px;font-size:5.8px;font-weight:bold;color:#e8e8e8"><span style="font-weight:normal;color:#bbb">&#9655;</span> AI</div>
    <div class="t" style="left:41px;top:72.5px;font-size:6.3px;color:#4a4a4a;letter-spacing:0.12px">In our example, we are adding reference to the <b style="color:#222">TriggerBox</b>, however your Actor will appear here.</div>
  </div>
  <div id="img2" class="a" style="left:72px;top:288px;width:550px;height:238px;border-radius:8px;overflow:hidden;background:#1c1c1c">
    <div class="a" style="left:0;top:0;width:550px;height:8px;background:#161616"></div>
    <div class="a" style="left:13px;top:2.5px;width:3px;height:3px;background:#4fd04f;clip-path:polygon(0 0,100% 50%,0 100%)"></div>
    <div class="a" style="left:18px;top:2.5px;width:18px;height:3px;background:repeating-linear-gradient(90deg,#555 0 2.5px,transparent 2.5px 5.5px)"></div>
    <div class="a" style="left:42px;top:1.5px;width:3px;height:5px;background:#888"></div>
    <div class="t" style="left:47px;top:2.3px;font-size:3.2px;color:#888">Platforms &#8964;</div>
    <!-- viewport -->
    <div class="a" style="left:0;top:8px;width:428px;height:225px;overflow:hidden;background:#b3b8ca">
      <!-- upper wall/left -->
      <div class="a" style="left:0;top:0;width:428px;height:70px;background:linear-gradient(180deg,#8c93ae 0%,#9399b3 100%)"></div>
      <div class="a" style="left:0;top:0;width:428px;height:70px;background-image:repeating-conic-gradient(#8289a6 0 25%,#9ba1ba 0 50%);background-size:10px 10px;opacity:.6"></div>
      <!-- sky and pale plane -->
      <div class="a" style="left:150px;top:0;width:20px;height:48px;background:linear-gradient(180deg,#f0f4f8,#d8e4ee)"></div>
      <div class="a" style="left:168px;top:0;width:40px;height:60px;background:#cfd0d8;clip-path:polygon(0 0,60% 0,100% 100%,40% 100%)"></div>
      <!-- stairs -->
      <div class="a" style="left:18px;top:12px;width:190px;height:88px;background:repeating-linear-gradient(180deg,#7b82a0 0 3px,#a1a7bf 3px 6px);clip-path:polygon(20% 0,55% 0,100% 60%,100% 100%,0 100%,8% 40%)"></div>
      <!-- light strip left -->
      <div class="a" style="left:0;top:54px;width:24px;height:14px;background:#dfe2ea"></div>
      <!-- floor -->
      <div class="a" style="left:0;top:92px;width:428px;height:133px;background:linear-gradient(180deg,#aeb3c6 0%,#b9bdcd 100%)"></div>
      <div class="a" style="left:-60px;top:92px;width:560px;height:200px;background-image:repeating-conic-gradient(#c3c7d5 0 25%,#a6acc1 0 50%);background-size:20px 20px;transform-origin:50% 0;transform:perspective(160px) rotateX(45deg) rotateZ(-18deg);opacity:.4"></div>
      <!-- left wall -->
      <div class="a" style="left:0;top:70px;width:28px;height:155px;background:repeating-linear-gradient(160deg,#8e94ad 0 6px,#a9aec3 6px 12px);clip-path:polygon(0 0,100% 0,60% 100%,0 100%)"></div>
      <div class="a" style="left:18px;top:126px;width:160px;height:2px;background:#60667e;transform:rotate(-9deg);transform-origin:0 0"></div>
      <div class="a" style="left:130px;top:88px;width:4px;height:4px;border-radius:50%;background:#c08a40"></div>
      <div class="a" style="left:2px;top:2px;width:4px;height:4px;border-radius:2px;background:rgba(30,30,30,.55)"></div>
      <div class="a" style="left:7px;top:2px;width:18px;height:4px;border-radius:2px;background:rgba(30,30,30,.55)"></div>
      <div class="a" style="left:27px;top:2px;width:8px;height:4px;border-radius:2px;background:rgba(30,30,30,.55)"></div>
      <div class="a" style="left:37px;top:2px;width:8px;height:4px;border-radius:2px;background:rgba(30,30,30,.55)"></div>
      <div class="a" style="left:36px;top:1px;width:4px;height:10px;background:#e0e0e6"></div>
      <div class="a" style="left:88px;top:2px;width:6px;height:10px;background:#d8d8e0;clip-path:polygon(0 0,100% 60%,60% 100%)"></div>
      <div class="a" style="left:365px;top:2px;width:60px;height:4px;background:repeating-linear-gradient(90deg,rgba(30,30,30,.55) 0 5px,transparent 5px 7px)"></div>
      <div class="a" style="left:365px;top:2px;width:4px;height:4px;background:#2a7ad8"></div>
      <div class="a" style="left:390px;top:2px;width:5px;height:4px;background:#2a7ad8"></div>
    </div>
    <!-- inner UE window -->
    <div class="a" style="left:194px;top:46px;width:229px;height:170px;background:#141414;overflow:hidden">
      <div class="a" style="left:2px;top:1px;width:8px;height:8px;border-radius:50%;border:1px solid #ddd"></div>
      <div class="a" style="left:14px;top:3px;width:70px;height:2px;background:repeating-linear-gradient(90deg,#888 0 5px,transparent 5px 9px)"></div>
      <div class="a" style="left:12px;top:7px;width:35px;height:4px;background:#222"></div>
      <div class="a" style="left:15px;top:8px;width:25px;height:2px;background:#777"></div>
      <div class="a" style="left:52px;top:8px;width:30px;height:2px;background:#555"></div>
      <div class="a" style="left:100px;top:8px;width:30px;height:2px;background:#555"></div>
      <div class="a" style="left:0;top:11px;width:229px;height:7px;background:#1e1e1e"></div>
      <div class="a" style="left:4px;top:13px;width:125px;height:3px;background:repeating-linear-gradient(90deg,#6a6a6a 0 12px,transparent 12px 18px)"></div>
      <div class="a" style="left:133px;top:11.5px;width:23px;height:6px;background:#1f74e0"></div>
      <div class="a" style="left:137px;top:13.5px;width:15px;height:2px;background:#cfe0ff"></div>
      <div class="a" style="left:180px;top:12.5px;width:4px;height:4px;background:#3fae3f"></div>
      <div class="a" style="left:186px;top:13px;width:20px;height:3px;background:repeating-linear-gradient(90deg,#666 0 3px,transparent 3px 5px)"></div>
      <div class="a" style="left:0;top:18px;width:44px;height:152px;background:#1a1a1a"></div>
      <div class="a" style="left:1px;top:19px;width:40px;height:4px;background:#232323"></div>
      <div class="a" style="left:2px;top:24px;width:14px;height:4px;background:#2e5a2e"></div>
      <div class="a" style="left:1px;top:30px;width:40px;height:4px;background:#3d5a80"></div>
      <div class="a" style="left:6px;top:36px;width:30px;height:2px;background:#777"></div>
      <div class="a" style="left:10px;top:40px;width:14px;height:2px;background:#777"></div>
      <div class="a" style="left:1px;top:62px;width:40px;height:4px;background:#232323"></div>
      <div class="a" style="left:2px;top:67px;width:14px;height:4px;background:#2e5a2e"></div>
      <div class="a" style="left:1px;top:73px;width:40px;height:4px;background:#262626"></div>
      <div class="a" style="left:5px;top:79px;width:32px;height:22px;background:repeating-linear-gradient(180deg,#777 0 1.5px,transparent 1.5px 4.4px)"></div>
      <div class="a" style="left:1px;top:103px;width:40px;height:4px;background:#262626"></div>
      <div class="a" style="left:5px;top:109px;width:30px;height:2px;background:#777"></div>
      <div class="a" style="left:1px;top:114px;width:40px;height:4px;background:#262626"></div>
      <div class="a" style="left:1px;top:119px;width:40px;height:4px;background:#262626"></div>
      <div class="a" style="left:5px;top:125px;width:28px;height:8px;background:repeating-linear-gradient(180deg,#777 0 1.5px,transparent 1.5px 3.5px)"></div>
      <div class="a" style="left:1px;top:136px;width:40px;height:4px;background:#262626"></div>
      <div class="a" style="left:44px;top:18px;width:128px;height:6px;background:#1b1b1b"></div>
      <div class="a" style="left:48px;top:20px;width:110px;height:2px;background:repeating-linear-gradient(90deg,#666 0 16px,transparent 16px 28px)"></div>
      <div class="a" style="left:44px;top:24px;width:128px;height:6px;background:#181818"></div>
      <div class="a" style="left:75px;top:26px;width:55px;height:2px;background:#666"></div>
      <div class="a" style="left:44px;top:30px;width:128px;height:105px;background:#1f1f1f;background-image:linear-gradient(90deg,rgba(0,0,0,.18) 1px,transparent 1px),linear-gradient(rgba(0,0,0,.18) 1px,transparent 1px);background-size:21px 21px"></div>
      <div class="a" style="left:57px;top:46px;width:51px;height:8px;background:#9a9a9a"></div>
      <div class="a" style="left:57px;top:56px;width:19px;height:2px;background:#a02020"></div>
      <div class="a" style="left:57px;top:57px;width:19px;height:6px;background:#181818"></div>
      <div class="a" style="left:57px;top:81px;width:24px;height:2px;background:#c02828"></div>
      <div class="a" style="left:57px;top:83px;width:24px;height:8px;background:#181818"></div>
      <div class="a" style="left:57px;top:96px;width:41px;height:8px;background:#8a8a8a"></div>
      <div class="a" style="left:57px;top:106px;width:14px;height:2px;background:#a02020"></div>
      <div class="a" style="left:57px;top:107px;width:14px;height:8px;background:#181818"></div>
      <div class="a" style="left:44px;top:135px;width:128px;height:29px;background:#1a1a1a"></div>
      <div class="a" style="left:46px;top:136px;width:25px;height:4px;background:#232323"></div>
      <div class="a" style="left:49px;top:144px;width:110px;height:2px;background:#555"></div>
      <div class="a" style="left:49px;top:154px;width:102px;height:1.5px;background:#666"></div>
      <div class="a" style="left:99px;top:72px;width:73px;height:73px;background:#161616;border:1px solid #2a2a2a"></div>
      <div class="a" style="left:100px;top:73px;width:71px;height:4px;background:#222"></div>
      <div class="a" style="left:100px;top:78px;width:70px;height:3px;border:1px solid #2a7ad0;background:#111"></div>
      <div class="a" style="left:112px;top:85px;width:94px;height:5px;background:#f2f2f2"></div>
      <div class="a" style="left:115px;top:86.5px;width:86px;height:1.5px;background:#777"></div>
      <div class="a" style="left:103px;top:92px;width:22px;height:51px;background:repeating-linear-gradient(180deg,#9a9a9a 0 1.2px,transparent 1.2px 3.1px)"></div>
      <div class="a" style="left:168px;top:80px;width:1.5px;height:24px;background:#555"></div>
      <div class="a" style="left:172px;top:18px;width:57px;height:146px;background:#1a1a1a"></div>
      <div class="a" style="left:174px;top:19px;width:30px;height:4px;background:#232323"></div>
      <div class="a" style="left:174px;top:26px;width:50px;height:3px;background:#0e0e0e"></div>
      <div class="a" style="left:176px;top:31px;width:45px;height:6px;background:repeating-linear-gradient(180deg,#555 0 1.5px,transparent 1.5px 4px)"></div>
      <div class="a" style="left:173px;top:40px;width:55px;height:4px;background:#232323"></div>
      <div class="a" style="left:173px;top:61px;width:55px;height:4px;background:#232323"></div>
      <div class="a" style="left:173px;top:77px;width:55px;height:4px;background:#232323"></div>
      <div class="a" style="left:176px;top:82px;width:18px;height:77px;background:repeating-linear-gradient(180deg,#666 0 1.5px,transparent 1.5px 4.8px)"></div>
      <div class="a" style="left:195px;top:79px;width:26px;height:76px;background:repeating-linear-gradient(180deg,#4fb84f 0 3.3px,#1a1a1a 3.3px 4.8px)"></div>
      <div class="a" style="left:0;top:164px;width:229px;height:6px;background:#151515"></div>
      <div class="a" style="left:4px;top:166px;width:60px;height:2px;background:repeating-linear-gradient(90deg,#666 0 14px,transparent 14px 20px)"></div>
    </div>
    <!-- right panels -->
    <div class="a" style="left:428px;top:8px;width:122px;height:225px;background:#181818;border-left:1px solid #0a0a0a"></div>
    <div class="t" style="left:516px;top:1.5px;font-size:3.5px;color:#999">&#9881; Settings &#8964;</div>
    <div class="a" style="left:429px;top:8px;width:121px;height:5px;background:#1e1e1e"></div>
    <div class="a" style="left:429px;top:8px;width:28px;height:5px;background:#262626"></div>
    <div class="t" style="left:431px;top:8.8px;font-size:3.3px;color:#bbb">&#9638; Outliner &nbsp;&nbsp;&#215;</div>
    <div class="a" style="left:431px;top:14px;width:109px;height:4px;background:#0c0c0c;border-radius:2px"></div>
    <div class="a" style="left:429px;top:19px;width:121px;height:4px;background:#262626"></div>
    <div class="t" style="left:441px;top:19.5px;font-size:3px;color:#999">Item Label &#9650;</div>
    <div class="t" style="left:518px;top:19.5px;font-size:3px;color:#999">Type</div>
    <div class="t" style="left:444px;top:25.00px;font-size:2.9px;color:#b0b0b0">&#9632; BP_Player</div>
    <div class="t" style="left:518px;top:25.00px;font-size:2.9px;color:#5a8ad8">Edit BP_Player</div>
    <div class="t" style="left:444px;top:28.65px;font-size:2.9px;color:#b0b0b0">&#9632; Cube</div>
    <div class="t" style="left:518px;top:28.65px;font-size:2.9px;color:#6e6e6e">StaticMeshActor</div>
    <div class="t" style="left:444px;top:32.30px;font-size:2.9px;color:#b0b0b0">&#9632; Cylinder Brush</div>
    <div class="t" style="left:518px;top:32.30px;font-size:2.9px;color:#6e6e6e">Brush</div>
    <div class="t" style="left:444px;top:35.95px;font-size:2.9px;color:#b0b0b0">&#9632; Cylinder Brush2</div>
    <div class="t" style="left:518px;top:35.95px;font-size:2.9px;color:#6e6e6e">Brush</div>
    <div class="t" style="left:444px;top:39.60px;font-size:2.9px;color:#b0b0b0">&#9632; Directional</div>
    <div class="t" style="left:518px;top:39.60px;font-size:2.9px;color:#6e6e6e">Brush</div>
    <div class="t" style="left:444px;top:43.25px;font-size:2.9px;color:#b0b0b0">&#9632; Emitter_BP</div>
    <div class="t" style="left:518px;top:43.25px;font-size:2.9px;color:#5a8ad8">Edit Emitter_BP</div>
    <div class="t" style="left:444px;top:46.90px;font-size:2.9px;color:#b0b0b0">&#9632; Floor</div>
    <div class="t" style="left:518px;top:46.90px;font-size:2.9px;color:#6e6e6e">Brush</div>
    <div class="t" style="left:444px;top:50.55px;font-size:2.9px;color:#b0b0b0">&#9632; Floor Triangle_StaticMesh</div>
    <div class="t" style="left:518px;top:50.55px;font-size:2.9px;color:#6e6e6e">StaticMeshActor</div>
    <div class="t" style="left:444px;top:54.20px;font-size:2.9px;color:#b0b0b0">&#9632; Light</div>
    <div class="t" style="left:518px;top:54.20px;font-size:2.9px;color:#6e6e6e">Brush</div>
    <div class="t" style="left:444px;top:57.85px;font-size:2.9px;color:#b0b0b0">&#9632; Linear Stair Brush</div>
    <div class="t" style="left:518px;top:57.85px;font-size:2.9px;color:#6e6e6e">Brush</div>
    <div class="t" style="left:444px;top:61.50px;font-size:2.9px;color:#b0b0b0">&#9632; Linear Stair Brush2</div>
    <div class="t" style="left:518px;top:61.50px;font-size:2.9px;color:#6e6e6e">Brush</div>
    <div class="t" style="left:444px;top:65.15px;font-size:2.9px;color:#b0b0b0">&#9632; Linear Stair Brush3</div>
    <div class="t" style="left:518px;top:65.15px;font-size:2.9px;color:#6e6e6e">Brush</div>
    <div class="t" style="left:444px;top:68.80px;font-size:2.9px;color:#b0b0b0">&#9632; Linear Stair Brush4</div>
    <div class="t" style="left:518px;top:68.80px;font-size:2.9px;color:#6e6e6e">Brush</div>
    <div class="t" style="left:444px;top:72.45px;font-size:2.9px;color:#b0b0b0">&#9632; Linear Stair Brush5</div>
    <div class="t" style="left:518px;top:72.45px;font-size:2.9px;color:#6e6e6e">Brush</div>
    <div class="t" style="left:444px;top:76.10px;font-size:2.9px;color:#b0b0b0">&#9632; Linear Stair Brush6</div>
    <div class="t" style="left:518px;top:76.10px;font-size:2.9px;color:#6e6e6e">Brush</div>
    <div class="t" style="left:444px;top:79.75px;font-size:2.9px;color:#b0b0b0">&#9632; Linear Stair Brush7</div>
    <div class="t" style="left:518px;top:79.75px;font-size:2.9px;color:#6e6e6e">Brush</div>
    <div class="t" style="left:444px;top:83.40px;font-size:2.9px;color:#b0b0b0">&#9632; Linear Stair Brush8</div>
    <div class="t" style="left:518px;top:83.40px;font-size:2.9px;color:#6e6e6e">Brush</div>
    <div class="t" style="left:444px;top:87.05px;font-size:2.9px;color:#b0b0b0">&#9632; NetworkPlayerStart</div>
    <div class="t" style="left:518px;top:87.05px;font-size:2.9px;color:#6e6e6e">PlayerStart</div>
    <div class="t" style="left:444px;top:90.70px;font-size:2.9px;color:#b0b0b0">&#9632; NetworkPlayerStart2</div>
    <div class="t" style="left:518px;top:90.70px;font-size:2.9px;color:#6e6e6e">PlayerStart</div>
    <div class="t" style="left:444px;top:94.35px;font-size:2.9px;color:#b0b0b0">&#9632; NetworkPlayerStart3</div>
    <div class="t" style="left:518px;top:94.35px;font-size:2.9px;color:#6e6e6e">PlayerStart</div>
    <div class="t" style="left:444px;top:98.00px;font-size:2.9px;color:#b0b0b0">&#9632; NetworkPlayerStart4</div>
    <div class="t" style="left:518px;top:98.00px;font-size:2.9px;color:#6e6e6e">PlayerStart</div>
    <div class="a" style="left:429px;top:101.15px;width:121px;height:3.6px;background:#3a5476"></div>
    <div class="t" style="left:444px;top:101.65px;font-size:2.9px;color:#b0b0b0">&#9632; PlayerStartSpawn_BP</div>
    <div class="t" style="left:518px;top:101.65px;font-size:2.9px;color:#5a8ad8">Edit PlayerStart_BP</div>
    <div class="t" style="left:444px;top:105.30px;font-size:2.9px;color:#b0b0b0">&#9632; SkyAtmos</div>
    <div class="t" style="left:518px;top:105.30px;font-size:2.9px;color:#6e6e6e">Brush</div>
    <div class="t" style="left:444px;top:108.95px;font-size:2.9px;color:#b0b0b0">&#9632; StaticMeshActor_StaticMesh</div>
    <div class="t" style="left:518px;top:108.95px;font-size:2.9px;color:#6e6e6e">StaticMeshActor</div>
    <div class="t" style="left:444px;top:112.60px;font-size:2.9px;color:#b0b0b0">&#9632; Water</div>
    <div class="t" style="left:518px;top:112.60px;font-size:2.9px;color:#6e6e6e">Brush</div>
    <div class="a" style="left:544px;top:28px;width:2px;height:86px;background:#3a3a3a"></div>
    <div class="a" style="left:429px;top:118px;width:121px;height:6px;background:#1b1b1b"></div>
    <div class="t" style="left:431px;top:119.5px;font-size:3px;color:#999">40 actors (1 selected)</div>
    <div class="a" style="left:429px;top:125px;width:121px;height:5px;background:#1e1e1e"></div>
    <div class="a" style="left:429px;top:125px;width:28px;height:5px;background:#262626"></div>
    <div class="t" style="left:431px;top:125.8px;font-size:3.3px;color:#bbb">&#9998; Details &nbsp;&#215;</div>
    <div class="t" style="left:431px;top:132px;font-size:3.5px;color:#ddd">&#9638; PlayerStartSpawn_BP</div>
    <div class="a" style="left:524px;top:131px;width:10px;height:5px;background:#2a2a2a"></div>
    <div class="a" style="left:525px;top:132.5px;width:3px;height:2px;background:#3fae3f"></div>
    <div class="a" style="left:429px;top:137px;width:121px;height:4.5px;background:#3c5a82"></div>
    <div class="t" style="left:432px;top:137.5px;font-size:3px;color:#e0e8f0">PlayerStartSpawn_BP (Self)</div>
    <div class="t" style="left:440px;top:142.5px;font-size:3px;color:#aaa">&#8627; DefaultSceneRoot</div>
    <div class="t" style="left:444px;top:147px;font-size:3px;color:#aaa">&#9632; Box</div>
    <div class="t" style="left:520px;top:142.5px;font-size:3px;color:#5a8ad8">Edit in Blueprint</div>
    <div class="t" style="left:520px;top:147px;font-size:3px;color:#5a8ad8">Edit in Blueprint</div>
    <div class="a" style="left:431px;top:152px;width:108px;height:4px;background:#0c0c0c;border-radius:2px"></div>
    <div class="a" style="left:432px;top:158px;width:106px;height:4px;background:repeating-linear-gradient(90deg,#2e2e2e 0 13px,transparent 13px 15.2px)"></div>
    <div class="a" style="left:522px;top:158px;width:8px;height:4px;background:#1f74e0"></div>
    <div class="t" style="left:432px;top:164px;font-size:3px;color:#999">&#9662; Transform</div>
    <div class="a" style="left:436px;top:168px;width:16px;height:3.5px;background:#101010"></div>
    <div class="t" style="left:437px;top:168.3px;font-size:2.8px;color:#aaa">Location &#8964;</div>
    <div class="a" style="left:479px;top:168px;width:19px;height:3.5px;background:#0e0e0e;border-left:1px solid #c83030"></div>
    <div class="a" style="left:481px;top:169.2px;width:8px;height:1px;background:#777"></div>
    <div class="a" style="left:500px;top:168px;width:19px;height:3.5px;background:#0e0e0e;border-left:1px solid #30b030"></div>
    <div class="a" style="left:502px;top:169.2px;width:8px;height:1px;background:#777"></div>
    <div class="a" style="left:521px;top:168px;width:19px;height:3.5px;background:#0e0e0e;border-left:1px solid #3060d0"></div>
    <div class="a" style="left:523px;top:169.2px;width:8px;height:1px;background:#777"></div>
    <div class="a" style="left:436px;top:173px;width:16px;height:3.5px;background:#101010"></div>
    <div class="t" style="left:437px;top:173.3px;font-size:2.8px;color:#aaa">Rotation &#8964;</div>
    <div class="a" style="left:479px;top:173px;width:19px;height:3.5px;background:#0e0e0e;border-left:1px solid #c83030"></div>
    <div class="a" style="left:481px;top:174.2px;width:8px;height:1px;background:#777"></div>
    <div class="a" style="left:500px;top:173px;width:19px;height:3.5px;background:#0e0e0e;border-left:1px solid #30b030"></div>
    <div class="a" style="left:502px;top:174.2px;width:8px;height:1px;background:#777"></div>
    <div class="a" style="left:521px;top:173px;width:19px;height:3.5px;background:#0e0e0e;border-left:1px solid #3060d0"></div>
    <div class="a" style="left:523px;top:174.2px;width:8px;height:1px;background:#777"></div>
    <div class="a" style="left:436px;top:178px;width:16px;height:3.5px;background:#101010"></div>
    <div class="t" style="left:437px;top:178.3px;font-size:2.8px;color:#aaa">Scale &#8964;</div>
    <div class="a" style="left:479px;top:178px;width:19px;height:3.5px;background:#0e0e0e;border-left:1px solid #c83030"></div>
    <div class="a" style="left:481px;top:179.2px;width:8px;height:1px;background:#777"></div>
    <div class="a" style="left:500px;top:178px;width:19px;height:3.5px;background:#0e0e0e;border-left:1px solid #30b030"></div>
    <div class="a" style="left:502px;top:179.2px;width:8px;height:1px;background:#777"></div>
    <div class="a" style="left:521px;top:178px;width:19px;height:3.5px;background:#0e0e0e;border-left:1px solid #3060d0"></div>
    <div class="a" style="left:523px;top:179.2px;width:8px;height:1px;background:#777"></div>
    <div class="t" style="left:432px;top:184px;font-size:3px;color:#999">&#9662; Rendering</div>
    <div class="t" style="left:432px;top:194px;font-size:3px;color:#999">&#9662; Replication</div>
    <div class="t" style="left:432px;top:206px;font-size:3px;color:#999">&#9662; Collision</div>
    <div class="t" style="left:432px;top:221px;font-size:3px;color:#999">&#9662; Advanced</div>
    <div class="t" style="left:432px;top:228px;font-size:3px;color:#999">&#9662; World</div>
    <div class="a" style="left:436px;top:189px;width:40px;height:1.2px;background:#555"></div>
    <div class="a" style="left:436px;top:197.5px;width:40px;height:1.2px;background:#555"></div>
    <div class="a" style="left:436px;top:201px;width:40px;height:1.2px;background:#555"></div>
    <div class="a" style="left:436px;top:210.5px;width:40px;height:1.2px;background:#555"></div>
    <div class="a" style="left:436px;top:215px;width:40px;height:1.2px;background:#555"></div>
    <div class="a" style="left:479px;top:196px;width:22px;height:3.5px;background:#0e0e0e"></div>
    <div class="a" style="left:479px;top:214px;width:24px;height:3.5px;background:#2a2a2a"></div>
    <div class="a" style="left:479px;top:218.5px;width:26px;height:3.5px;background:#2a2a2a"></div>
    <div class="a" style="left:546px;top:134px;width:2px;height:80px;background:#333"></div>
    <div class="a" style="left:0;top:233px;width:550px;height:5px;background:#141414"></div>
  </div>
  <svg class="a" style="left:16px;top:552px;border-radius:50%" width="40" height="40"><use href="#av2"/></svg>
  <div class="t" style="left:72.5px;top:553.5px;font-size:15px;color:#f2f3f5;letter-spacing:-0.1px">RJUsher_</div>
  <div class="t" style="left:148px;top:556.5px;font-size:11.2px;color:#949ba4">Today at 21:54</div>
  <div id="img3" class="a" style="left:72px;top:574px;width:364px;height:350px;border-radius:8px 0 0 8px;overflow:hidden;background:#1c1c1c">
    <div class="a" style="left:0;top:0;width:364px;height:18px;background:#151515"></div>
    <div class="t" style="left:2px;top:2px;font-size:4.5px;color:#bbb">ools &nbsp;&nbsp;&nbsp;&nbsp;&nbsp; Help</div>
    <div class="a" style="left:0;top:18px;width:364px;height:14px;background:#1a1a1a"></div>
    <div class="t" style="left:2px;top:23.5px;font-size:4.5px;color:#aaa;letter-spacing:.1px">&#9679; Find &nbsp;&nbsp;&nbsp;&nbsp; &#9679; Hide Unrelated &nbsp;&nbsp;&nbsp;&nbsp; &#9881; Class Settings</div>
    <div class="a" style="left:112px;top:21px;width:40px;height:9px;background:#1f74e0;border-radius:1px"></div>
    <div class="t" style="left:118px;top:23.5px;font-size:4.5px;color:#fff">&#9999; Class Defaults</div>
    <div class="t" style="left:156px;top:23.5px;font-size:4.5px;color:#aaa">&#9654; Simulation</div>
    <div class="a" style="left:196px;top:21px;width:6px;height:8px;background:#3fae3f;clip-path:polygon(0 0,100% 50%,0 100%)"></div>
    <div class="a" style="left:206px;top:22px;width:28px;height:6px;background:repeating-linear-gradient(90deg,#888 0 4px,transparent 4px 8px)"></div>
    <div class="a" style="left:252px;top:20px;width:36px;height:9px;background:#0f0f0f;border-radius:2px"></div>
    <div class="t" style="left:255px;top:22.5px;font-size:4.3px;color:#bbb">RespawnTest &#8964;</div>
    <div class="a" style="left:0;top:32px;width:364px;height:12px;background:#161616"></div>
    <div class="t" style="left:20px;top:35px;font-size:4.5px;color:#999">&#9638; Viewport &nbsp;&nbsp;&nbsp;&nbsp;&nbsp;&nbsp;&nbsp;&nbsp;&nbsp;&nbsp;&nbsp; &#402; Construction Scr... &nbsp;&nbsp;&nbsp;&nbsp;&nbsp;&nbsp; &#402; Spawn Player</div>
    <div class="a" style="left:177px;top:33px;width:52px;height:11px;background:#232323"></div>
    <div class="t" style="left:181px;top:35.5px;font-size:4.5px;color:#ccc">&#9638; Event Graph &nbsp;&nbsp;&nbsp;&nbsp;&nbsp;&nbsp;&nbsp; &#215;</div>
    <div class="a" style="left:0;top:44px;width:364px;height:10px;background:#1b1b1b"></div>
    <div class="a" style="left:22px;top:47px;width:3px;height:5px;background:#aaa"></div>
    <div class="t" style="left:27px;top:46.5px;font-size:5px;color:#888">&#8964;</div>
    <svg class="a" style="left:36px;top:46px" width="24" height="8" viewBox="0 0 24 8"><path d="M1 4h8M1 4l3-3M1 4l3 3M15 4h8M23 4l-3-3M23 4l-3 3" stroke="#bbb" stroke-width="1.6" fill="none"/></svg>
    <div class="a" style="left:65px;top:46.5px;width:3px;height:3px;background:#bbb"></div><div class="a" style="left:70px;top:46.5px;width:3px;height:3px;background:#bbb"></div><div class="a" style="left:65px;top:50.5px;width:3px;height:3px;background:#bbb"></div><div class="a" style="left:70px;top:50.5px;width:3px;height:3px;background:#bbb"></div>
    <div class="t" style="left:77px;top:45.8px;font-size:6.6px;color:#8a8a8a;letter-spacing:-.05px">RespawnTest &#8250; Event Graph</div>
    <div class="a" style="left:0;top:44px;width:19px;height:295px;background:#1c1c1c;border-right:1px solid #121212"></div>
    <div class="a" style="left:0;top:50px;width:14px;height:4px;background:#0d0d0d;border-radius:0 2px 2px 0"></div>
    <div class="a" style="left:0;top:56px;width:16px;height:7px;background:#3f5a7c"></div>
    <div class="a" style="left:0;top:124px;width:19px;height:95px;background:#191919"></div>
    <div class="a" style="left:0;top:133px;width:9px;height:6px;background:#0a0a0a;border-radius:0 3px 3px 0"></div>
    <div class="a" style="left:0;top:142px;width:19px;height:9px;background:#222"></div>
    <div class="a" style="left:0;top:160px;width:19px;height:9px;background:#222"></div>
    <div class="a" style="left:0;top:200px;width:19px;height:8px;background:#262626"></div>
    <div class="a" style="left:0;top:210px;width:19px;height:8px;background:#222"></div>
    <div class="a" style="left:0;top:220px;width:19px;height:8px;background:#222"></div>
    <div class="a" style="left:0;top:278px;width:19px;height:10px;background:#202020"></div>
    <div class="a" style="left:10px;top:133.5px;width:5px;height:5px;border-radius:50%;border:1px solid #999"></div>
    <div class="a" style="left:10px;top:144.5px;width:5px;height:5px;border-radius:50%;border:1px solid #999"></div>
    <div class="a" style="left:10px;top:162.5px;width:5px;height:5px;border-radius:50%;border:1px solid #999"></div>
    <div class="a" style="left:10px;top:203.5px;width:5px;height:5px;border-radius:50%;border:1px solid #999"></div>
    <div class="a" style="left:10px;top:214.5px;width:5px;height:5px;border-radius:50%;border:1px solid #999"></div>
    <div class="a" style="left:10px;top:224.5px;width:5px;height:5px;border-radius:50%;border:1px solid #999"></div>
    <div class="a" style="left:10px;top:281.5px;width:5px;height:5px;border-radius:50%;border:1px solid #999"></div>
    <div class="a" style="left:10.5px;top:240.5px;width:5px;height:3px;border-radius:50%;background:#ccc"></div>
    <div class="a" style="left:10.5px;top:248.5px;width:5px;height:3px;border-radius:50%;background:#ccc"></div>
    <div class="a" style="left:10.5px;top:257.5px;width:5px;height:3px;border-radius:50%;background:#ccc"></div>
    <div class="a" style="left:10.5px;top:265.5px;width:5px;height:3px;border-radius:50%;background:#ccc"></div>
    <div class="t" style="left:2px;top:328.5px;font-size:4px;color:#666">nsole Command</div>
    <div class="a" style="left:19px;top:54px;width:345px;height:212px;background-color:#232323;background-image:linear-gradient(90deg,rgba(0,0,0,.22) 1px,transparent 1px),linear-gradient(rgba(0,0,0,.22) 1px,transparent 1px),linear-gradient(90deg,rgba(255,255,255,.02) 1px,transparent 1px),linear-gradient(rgba(255,255,255,.02) 1px,transparent 1px);background-size:62px 62px,62px 62px,8px 8px,8px 8px;background-position:-10px -20px,-10px -20px,0 0,0 0"></div>
    <!-- nodes -->
    <div class="a" style="left:36px;top:130px;width:79px;height:60px;background:rgba(16,16,16,.94);border-radius:2px;box-shadow:0 0 2px #000"></div>
    <div class="a" style="left:36px;top:130px;width:79px;height:7px;background:linear-gradient(90deg,#a02222,#6a1a1a);border-radius:2px 2px 0 0"></div>
    <div class="t" style="left:39px;top:131.5px;font-size:3.6px;color:#f0e0e0">&#9685; On Component Begin Overlap (Box)</div>
    <div class="a" style="left:108px;top:138px;width:4px;height:5px;background:#eee;clip-path:polygon(0 0,60% 0,100% 50%,60% 100%,0 100%)"></div>
<div class="t" style="left:46px;top:145.75px;width:60px;text-align:right;font-size:3.4px;color:#c8c8c8">Overlapped Component</div>
<div class="a" style="left:108.5px;top:145.95px;width:3.6px;height:3.6px;border-radius:50%;background:#39c"></div>
<div class="t" style="left:46px;top:153.25px;width:60px;text-align:right;font-size:3.4px;color:#c8c8c8">Other Actor</div>
<div class="a" style="left:108.5px;top:153.45px;width:3.6px;height:3.6px;border-radius:50%;background:#4af"></div>
<div class="t" style="left:46px;top:161.00px;width:60px;text-align:right;font-size:3.4px;color:#c8c8c8">Other Comp</div>
<div class="a" style="left:108.5px;top:161.20px;width:3.6px;height:3.6px;border-radius:50%;background:#4af"></div>
<div class="t" style="left:46px;top:168.75px;width:60px;text-align:right;font-size:3.4px;color:#c8c8c8">Other Body Index</div>
<div class="a" style="left:108.5px;top:168.95px;width:3.6px;height:3.6px;border-radius:50%;background:#3c9"></div>
<div class="t" style="left:46px;top:176.25px;width:60px;text-align:right;font-size:3.4px;color:#c8c8c8">From Sweep</div>
<div class="a" style="left:108.5px;top:176.45px;width:3.6px;height:3.6px;border-radius:50%;background:#c33"></div>
<div class="t" style="left:46px;top:184.00px;width:60px;text-align:right;font-size:3.4px;color:#c8c8c8">Sweep Result</div>
<div class="a" style="left:108.5px;top:184.20px;width:3.6px;height:3.6px;border-radius:50%;background:#36c"></div>

    <div class="a" style="left:118px;top:134px;width:57px;height:34px;background:rgba(16,16,16,.94);border-radius:2px;box-shadow:0 0 2px #000"></div>
    <div class="a" style="left:118px;top:134px;width:57px;height:6px;background:linear-gradient(90deg,#1f8080,#175a5a)"></div>
    <div class="t" style="left:121px;top:135.2px;font-size:3.5px;color:#e8f4f4">&#10144; Cast To BP_Player</div>
    <div class="a" style="left:121px;top:144.5px;width:4px;height:5px;background:#eee;clip-path:polygon(0 0,60% 0,100% 50%,60% 100%,0 100%)"></div>
    <div class="a" style="left:169px;top:144.5px;width:4px;height:5px;background:#eee;clip-path:polygon(0 0,60% 0,100% 50%,60% 100%,0 100%)"></div>
    <div class="a" style="left:121.5px;top:152.5px;width:3.6px;height:3.6px;border-radius:50%;background:#4af"></div>
    <div class="t" style="left:127px;top:152.3px;font-size:3.4px;color:#c8c8c8">Object</div>
    <div class="t" style="left:146px;top:152.3px;font-size:3.4px;color:#c8c8c8">Cast Failed</div>
    <div class="a" style="left:169px;top:152.3px;width:4px;height:4px;border:1px solid #ddd;border-radius:50%"></div>
    <div class="t" style="left:141px;top:160.3px;font-size:3.4px;color:#c8c8c8">As BP Player</div>
    <div class="a" style="left:169.5px;top:160.5px;width:3.6px;height:3.6px;border-radius:50%;background:#4af"></div>

    <div class="a" style="left:190px;top:128px;width:57px;height:33px;background:rgba(16,16,16,.94);border-radius:2px;box-shadow:0 0 2px #000"></div>
    <div class="a" style="left:190px;top:128px;width:57px;height:9px;background:linear-gradient(90deg,#5f7b96,#3c5268)"></div>
    <div class="t" style="left:193px;top:128.8px;font-size:3.5px;color:#eef">&#9685; Get Player Start Points</div>
    <div class="t" style="left:197px;top:132.8px;font-size:2.8px;color:#9ab">Target is Respawn Test</div>
    <div class="a" style="left:193px;top:144px;width:4px;height:5px;background:#eee;clip-path:polygon(0 0,60% 0,100% 50%,60% 100%,0 100%)"></div>
    <div class="a" style="left:241px;top:144px;width:4px;height:5px;background:#eee;clip-path:polygon(0 0,60% 0,100% 50%,60% 100%,0 100%)"></div>
    <div class="a" style="left:193.5px;top:154px;width:3.6px;height:3.6px;border-radius:50%;border:1px solid #4af"></div>
    <div class="t" style="left:199px;top:154px;font-size:3.4px;color:#c8c8c8">Target</div>
    <div class="a" style="left:210px;top:153px;width:9px;height:5px;border:1px solid #888"></div>

    <div class="a" style="left:276px;top:124px;width:88px;height:78px;background:rgba(16,16,16,.94);border-radius:2px;box-shadow:0 0 2px #000"></div>
    <div class="a" style="left:276px;top:124px;width:88px;height:11px;background:linear-gradient(90deg,#4c7296,#2f4a66)"></div>
    <div class="t" style="left:279px;top:125.5px;font-size:3.6px;color:#eef">&#402; Set Actor Location</div>
    <div class="t" style="left:283px;top:130.5px;font-size:2.9px;color:#9ab">Target is Actor</div>
    <div class="a" style="left:280px;top:139.5px;width:4px;height:5px;background:#eee;clip-path:polygon(0 0,60% 0,100% 50%,60% 100%,0 100%)"></div>
    <div class="t" style="left:337px;top:148px;font-size:3.2px;color:#c8c8c8">Sweep Hit Result</div>
    <div class="t" style="left:342px;top:155.5px;font-size:3.2px;color:#c8c8c8">Return Value</div>
<div class="a" style="left:280.5px;top:148.2px;width:3.6px;height:3.6px;border-radius:50%;border:1px solid #4af"></div>
<div class="t" style="left:286px;top:148px;font-size:3.4px;color:#c8c8c8">Target</div>
<div class="a" style="left:280.5px;top:156.5px;width:3.6px;height:3.6px;border-radius:50%;border:1px solid #3c6"></div>
<div class="t" style="left:286px;top:156.3px;font-size:3.4px;color:#c8c8c8">New Location X</div>
<div class="a" style="left:311px;top:155.8px;width:14px;height:5px;border:1px solid #777"></div>
<div class="a" style="left:280.5px;top:165.2px;width:3.6px;height:3.6px;border-radius:50%;border:1px solid #3c6"></div>
<div class="t" style="left:286px;top:165px;font-size:3.4px;color:#c8c8c8">New Location Y</div>
<div class="a" style="left:311px;top:164.5px;width:9px;height:5px;border:1px solid #777"></div>
<div class="a" style="left:280.5px;top:173.89999999999998px;width:3.6px;height:3.6px;border-radius:50%;border:1px solid #3c6"></div>
<div class="t" style="left:286px;top:173.7px;font-size:3.4px;color:#c8c8c8">New Location Z</div>
<div class="a" style="left:311px;top:173.2px;width:9px;height:5px;border:1px solid #777"></div>
<div class="a" style="left:280.5px;top:182.7px;width:3.6px;height:3.6px;border-radius:50%;border:1px solid #c33"></div>
<div class="t" style="left:286px;top:182.5px;font-size:3.4px;color:#c8c8c8">Sweep</div>
<div class="a" style="left:300px;top:182.0px;width:5px;height:5px;border:1px solid #444"></div>
<div class="a" style="left:280.5px;top:191.2px;width:3.6px;height:3.6px;border-radius:50%;border:1px solid #c33"></div>
<div class="t" style="left:286px;top:191px;font-size:3.4px;color:#c8c8c8">Teleport</div>
<div class="a" style="left:303px;top:190.5px;width:5px;height:5px;border:1px solid #444"></div>

    <svg class="a" style="left:112px;top:138px" width="170" height="34" viewBox="0 0 170 34"><path d="M0 3 C5 3 5 9 9 9" stroke="#ccc" stroke-width=".8" fill="none"/><path d="M61 9 C70 9 70 8 79 8" stroke="#ccc" stroke-width=".8" fill="none"/><path d="M133 8 C150 8 150 4 168 4" stroke="#ccc" stroke-width=".8" fill="none"/><path d="M0 25 C5 25 5 16 10 16" stroke="#4a9ad8" stroke-width=".8" fill="none"/><path d="M61 24 C100 24 130 12 168 12" stroke="#4a9ad8" stroke-width=".8" fill="none"/></svg>
    <div class="t" style="left:291px;top:238.8px;font-size:21px;font-weight:bold;color:#4a4a4a;letter-spacing:-.4px;transform:scaleX(.8);transform-origin:0 0">BLUEPRI</div>
    <!-- bottom panel -->
    <div class="a" style="left:19px;top:266px;width:345px;height:7px;background:#161616"></div>
    <div class="a" style="left:20px;top:266px;width:53px;height:7px;background:#222"></div>
    <div class="t" style="left:24px;top:267.5px;font-size:4.5px;color:#999">&#9638; Compiler Results &nbsp;&#215; &nbsp;&nbsp;&nbsp;&#9906; Find Results</div>
    <div class="a" style="left:19px;top:273px;width:345px;height:54px;background:#1c1c1c"></div>
    <div class="a" style="left:0;top:327px;width:364px;height:11px;background:#161616"></div>
    <div class="a" style="left:0;top:329px;width:63px;height:6px;background:#0e0e0e"></div>
    <div class="a" style="left:0;top:338px;width:364px;height:12px;background:linear-gradient(90deg,#2a2b45 0%,#2e2a48 35%,#4a2a48 50%,#5a2c45 58%,#3c2d56 75%,#2f2c58 100%)"></div>
    <div class="a" style="left:4px;top:341px;width:7px;height:7px;border-radius:1.75px;background:#e8b840"></div><div class="a" style="left:20px;top:341px;width:7px;height:7px;border-radius:1.75px;background:#dfe4ee"></div><div class="a" style="left:36px;top:341px;width:7px;height:7px;border-radius:1.75px;background:#3d8ee8"></div><div class="a" style="left:52px;top:341px;width:7px;height:7px;border-radius:1.75px;background:radial-gradient(circle,#4a8af0 30%,#e04a3a 32%,#f0c030 60%,#3aa050 80%)"></div><div class="a" style="left:68px;top:341px;width:7px;height:7px;border-radius:1.75px;background:#1a2a5a"></div><div class="a" style="left:84px;top:341px;width:7px;height:7px;border-radius:1.75px;background:#8ab0e0"></div><div class="a" style="left:100px;top:341px;width:7px;height:7px;border-radius:1.75px;background:#2ec05a"></div><div class="a" style="left:116px;top:341px;width:7px;height:7px;border-radius:1.75px;background:linear-gradient(135deg,#f0a040,#e040a0,#40a0f0)"></div><div class="a" style="left:132px;top:341px;width:7px;height:7px;border-radius:1.75px;background:#6a72f0"></div><div class="a" style="left:148px;top:341px;width:7px;height:7px;border-radius:1.75px;background:linear-gradient(90deg,#e0a040,#4a80e0,#e04060)"></div><div class="a" style="left:161px;top:339px;width:13px;height:11px;background:rgba(255,255,255,.16)"></div><div class="a" style="left:164px;top:341px;width:7px;height:7px;border-radius:1.75px;background:#e8e8e8"></div>
  </div>
  <div id="img4" class="a" style="left:440px;top:574px;width:182px;height:173px;border-radius:0 8px 0 0;overflow:hidden;background:#1c1c1c">
    <div class="a" style="left:0;top:0;width:182px;height:10px;background:#151515"></div>
    <div class="t" style="left:1px;top:2px;font-size:3.5px;color:#999">Tools &nbsp;&nbsp;&nbsp; Help</div>
    <div class="a" style="left:0;top:10px;width:182px;height:8px;background:#1a1a1a"></div>
    <div class="t" style="left:2px;top:12.5px;font-size:3.3px;color:#8a8a8a">&#9679; Find &nbsp; &#9679; Hide Unrelated &nbsp;| &nbsp;&#9881; Class Settings</div>
    <div class="a" style="left:56px;top:11.5px;width:20px;height:5.5px;background:#1f74e0"></div>
    <div class="a" style="left:59px;top:13.5px;width:14px;height:1.5px;background:#b8d4ff"></div>
    <div class="t" style="left:79px;top:12.5px;font-size:3.3px;color:#8a8a8a">&#9654; Simulation</div>
    <div class="a" style="left:100px;top:12px;width:4px;height:4px;background:#3fae3f;clip-path:polygon(0 0,100% 60%,0 100%)"></div>
    <div class="a" style="left:106px;top:12.5px;width:14px;height:3px;background:repeating-linear-gradient(90deg,#555 0 2px,transparent 2px 4px)"></div>
    <div class="a" style="left:125px;top:11px;width:17px;height:6px;background:#0c0c0c;border-radius:1px"></div>
    <div class="a" style="left:127px;top:13.5px;width:12px;height:1px;background:#888"></div>
    <div class="a" style="left:145px;top:12px;width:3px;height:4px;background:#ccc"></div>
    <div class="a" style="left:0;top:18px;width:182px;height:5px;background:#151515"></div>
    <div class="t" style="left:13px;top:19px;font-size:3px;color:#777">&#9638; Viewport &nbsp;&nbsp;&nbsp;&nbsp;&nbsp;&nbsp;&nbsp; &#402; Construction Scr...</div>
    <div class="a" style="left:64px;top:18px;width:25px;height:5px;background:#232323"></div>
    <div class="t" style="left:66px;top:19px;font-size:3px;color:#ccc">&#402; Spawn Player &nbsp;&#215;</div>
    <div class="t" style="left:91px;top:19px;font-size:3px;color:#777">&#9638; Event Graph</div>
    <div class="a" style="left:0;top:23px;width:182px;height:6px;background:#1b1b1b"></div>
    <div class="t" style="left:14px;top:24.2px;font-size:3.5px;color:#777">&#9632; &#9664; &#9654; &nbsp;&#402; RespawnTest &gt; Spawn Player</div>
    <div class="a" style="left:0;top:23px;width:10px;height:143px;background:#1c1c1c"></div>
    <div class="a" style="left:0;top:25px;width:9px;height:4px;background:#3f5a7c"></div>
    <div class="a" style="left:0;top:62px;width:10px;height:6px;background:#191919"></div>
    <div class="a" style="left:0;top:64px;width:5px;height:3px;background:#0a0a0a"></div>
    <div class="a" style="left:0;top:70px;width:10px;height:4px;background:#222"></div>
    <div class="a" style="left:0;top:79px;width:10px;height:4px;background:#222"></div>
    <div class="a" style="left:0;top:102px;width:10px;height:4px;background:#262626"></div>
    <div class="a" style="left:0;top:108px;width:10px;height:4px;background:#222"></div>
    <div class="a" style="left:6px;top:116px;width:3px;height:13px;background:repeating-linear-gradient(180deg,#bbb 0 1.5px,transparent 1.5px 4px)"></div>
    <div class="a" style="left:10px;top:29px;width:172px;height:102px;background-color:#232323;background-image:linear-gradient(90deg,rgba(0,0,0,.2) 1px,transparent 1px),linear-gradient(rgba(0,0,0,.2) 1px,transparent 1px),linear-gradient(90deg,rgba(255,255,255,.018) 1px,transparent 1px),linear-gradient(rgba(255,255,255,.018) 1px,transparent 1px);background-size:41px 41px,41px 41px,4px 4px,4px 4px"></div>
    <div class="a" style="left:24px;top:67px;width:16px;height:12px;background:#141414"></div>
    <div class="a" style="left:24px;top:67px;width:16px;height:2.5px;background:#9a3ab0"></div>
    <div class="a" style="left:26px;top:74px;width:12px;height:3px;background:repeating-linear-gradient(180deg,#666 0 .8px,transparent .8px 1.6px)"></div>
    <div class="a" style="left:40px;top:69.5px;width:50px;height:.8px;background:#999"></div>
    <div class="a" style="left:61px;top:74px;width:21px;height:8px;background:#141414"></div>
    <div class="a" style="left:61px;top:74px;width:21px;height:3px;background:#5a8a5a"></div>
    <div class="a" style="left:64px;top:79px;width:14px;height:3px;background:#2a6a8a;border-radius:2px"></div>
    <div class="a" style="left:82px;top:75.5px;width:8px;height:.8px;background:#d07030;transform:rotate(-15deg)"></div>
    <div class="a" style="left:90px;top:67px;width:38px;height:29px;background:#141414"></div>
    <div class="a" style="left:90px;top:67px;width:38px;height:3px;background:#4a6a8a"></div>
    <div class="a" style="left:92px;top:75px;width:16px;height:18px;background:repeating-linear-gradient(180deg,#555 0 .8px,transparent .8px 3px)"></div>
    <div class="a" style="left:91px;top:73px;width:2px;height:2px;background:#d07030"></div>
    <div class="a" style="left:70px;top:94px;width:16px;height:3px;background:#2a7a6a;border-radius:2px"></div>
    <svg class="a" style="left:84px;top:82px" width="10" height="14" viewBox="0 0 10 14"><path d="M1 13 C5 13 4 2 9 1" stroke="#3a9a8a" stroke-width=".8" fill="none"/></svg>
    <div class="a" style="left:137px;top:67px;width:17px;height:14px;background:#141414"></div>
    <div class="a" style="left:137px;top:67px;width:17px;height:3px;background:#4a6a8a"></div>
    <div class="a" style="left:152px;top:65px;width:3px;height:3px;background:#eee"></div>
    <div class="a" style="left:133px;top:78px;width:24px;height:7px;background:#141414"></div>
    <div class="a" style="left:133px;top:78px;width:24px;height:2.5px;background:#5a8a5a"></div>
    <div class="a" style="left:140px;top:85px;width:17px;height:2.5px;background:#2a7a6a;border-radius:2px"></div>
    <svg class="a" style="left:128px;top:69px" width="30" height="16" viewBox="0 0 30 16"><path d="M0 1 C5 1 5 3 9 3" stroke="#aaa" stroke-width=".6" fill="none"/><path d="M0 3 C6 3 6 8 12 8 C18 8 20 13 28 14" stroke="#3a8ad0" stroke-width=".7" fill="none"/></svg>
    <div class="a" style="left:154px;top:70px;width:11px;height:.7px;background:#aaa"></div>
    <div class="a" style="left:165px;top:69px;width:17px;height:10px;background:#141414"></div>
    <div class="a" style="left:165px;top:69px;width:17px;height:2.5px;background:#9a3ab0"></div>
    <div class="a" style="left:168px;top:76px;width:3px;height:1px;background:#c33"></div>
    <div class="t" style="left:146px;top:119px;font-size:10px;font-weight:bold;color:#555;letter-spacing:-.6px;transform:scaleX(.85);transform-origin:0 0">BLUEPRI</div>
    <div class="a" style="left:10px;top:131px;width:172px;height:5px;background:#161616"></div>
    <div class="t" style="left:12px;top:131.8px;font-size:3px;color:#777">&#9638; Compiler Results &nbsp;&#215; &nbsp; &#9906; Find Results</div>
    <div class="a" style="left:10px;top:136px;width:172px;height:25px;background:#1c1c1c"></div>
    <div class="a" style="left:0;top:161px;width:182px;height:5px;background:#161616"></div>
    <div class="a" style="left:15px;top:162px;width:22px;height:3px;background:#0c0c0c"></div>
    <div class="a" style="left:0;top:166px;width:182px;height:7px;background:linear-gradient(90deg,#2a2b45 0%,#2e2a48 35%,#4a2a48 50%,#5a2c45 58%,#3c2d56 75%,#2f2c58 100%)"></div>
    <div class="a" style="left:4px;top:167px;width:4px;height:4px;border-radius:1.0px;background:#e8b840"></div><div class="a" style="left:12px;top:167px;width:4px;height:4px;border-radius:1.0px;background:#dfe4ee"></div><div class="a" style="left:20px;top:167px;width:4px;height:4px;border-radius:1.0px;background:#3d8ee8"></div><div class="a" style="left:28px;top:167px;width:4px;height:4px;border-radius:1.0px;background:radial-gradient(circle,#4a8af0 30%,#e04a3a 32%,#f0c030 60%,#3aa050 80%)"></div><div class="a" style="left:36px;top:167px;width:4px;height:4px;border-radius:1.0px;background:#1a2a5a"></div><div class="a" style="left:44px;top:167px;width:4px;height:4px;border-radius:1.0px;background:#8ab0e0"></div><div class="a" style="left:52px;top:167px;width:4px;height:4px;border-radius:1.0px;background:#2ec05a"></div><div class="a" style="left:60px;top:167px;width:4px;height:4px;border-radius:1.0px;background:linear-gradient(135deg,#f0a040,#e040a0,#40a0f0)"></div><div class="a" style="left:68px;top:167px;width:4px;height:4px;border-radius:1.0px;background:#6a72f0"></div><div class="a" style="left:76px;top:167px;width:4px;height:4px;border-radius:1.0px;background:linear-gradient(90deg,#e0a040,#4a80e0,#e04060)"></div><div class="a" style="left:81px;top:165px;width:10px;height:8px;background:rgba(255,255,255,.16)"></div><div class="a" style="left:84px;top:167px;width:4px;height:4px;border-radius:1.0px;background:#e8e8e8"></div>
  </div>
  <div id="img5" class="a" style="left:440px;top:751px;width:182px;height:173px;border-radius:0 0 8px 0;overflow:hidden;background:#232323">
    <div class="a" style="left:0;top:0;width:182px;height:9px;background:#171717"></div>
    <div class="a" style="left:0;top:9px;width:182px;height:14px;background:#262626"></div>
    <div class="a" style="left:0;top:23px;width:182px;height:1px;background:#181818"></div>
    <div class="a" style="left:0;top:26px;width:16px;height:7px;background:#101010;border-radius:0 4px 4px 0"></div>
    <div class="t" style="left:20px;top:26px;font-size:6px;color:#888">&#9633; &nbsp;&#9663;&#8964;</div>
    <div class="a" style="left:0;top:38px;width:13px;height:47px;background:#1a1a1a;border-radius:0 3px 3px 0"></div>
    <div class="a" style="left:0;top:66px;width:13px;height:19px;background:#3a3a3a"></div>
    <div class="t" style="left:0px;top:38px;font-size:10px;color:#ddd">&#10041;</div><div class="t" style="left:4px;top:48px;font-size:8px;color:#ddd">&#8598;</div>
    <div class="a" style="left:18px;top:38px;width:29px;height:47px;background:#161616;border:1px solid #1a4a8a"></div>
    <div class="a" style="left:24px;top:40px;width:17px;height:17px;border-radius:50%;background:radial-gradient(circle at 50% 35%,#fafafa 0%,#bdbdbd 45%,#6a6a6a 100%)"></div>
    <div class="a" style="left:21px;top:57px;width:23px;height:5px;background:#e0e0e0;clip-path:polygon(15% 0,85% 0,100% 100%,0 100%)"></div>
    <div class="a" style="left:18px;top:66px;width:29px;height:20px;background:#2a8bf5"></div>
    <div class="t" style="left:20px;top:68px;font-size:4px;color:#cfe4ff">RespawnTest</div>
    <div class="a" style="left:48px;top:54px;width:85px;height:91px;background:#1c1c1c;border:1.5px solid #5a5a5a"></div>
    <div class="a" style="left:50px;top:56px;width:81px;height:13px;border:1px solid #4a4a4a"></div>
    <div class="t" style="left:53px;top:59px;font-size:6.2px;color:#e5e5e5;letter-spacing:-.15px">RespawnTest <span style="font-size:4.2px">(Blueprint Class)</span></div>
    <div class="a" style="left:50px;top:71px;width:81px;height:72px;border:1px solid #4a4a4a"></div>
    <div class="t" style="left:53px;top:75.0px;font-size:4.3px;color:#8a8a8a;letter-spacing:-0.05px">Path: <span style="color:#d8d8d8">/Game/Blueprints/SplitScreen</span></div><div class="t" style="left:53px;top:81.3px;font-size:4.3px;color:#8a8a8a;letter-spacing:-0.05px">Asset Filepath Length: <span style="color:#d8d8d8">80 / 210</span></div><div class="t" style="left:53px;top:87.6px;font-size:4.3px;color:#8a8a8a;letter-spacing:-0.05px">Cooking Filepath Length: <span style="color:#d8d8d8">120 / 260</span></div><div class="t" style="left:53px;top:93.9px;font-size:4.3px;color:#8a8a8a;letter-spacing:-0.05px">Disk Size: <span style="color:#d8d8d8">164.118 KiB</span></div><div class="t" style="left:53px;top:100.2px;font-size:4.3px;color:#8a8a8a;letter-spacing:-0.05px">Parent Class: <span style="color:#d8d8d8">Actor</span></div><div class="t" style="left:53px;top:106.5px;font-size:4.3px;color:#8a8a8a;letter-spacing:-0.05px">Native Parent Class: <span style="color:#d8d8d8">Actor</span></div><div class="t" style="left:53px;top:112.8px;font-size:4.3px;color:#8a8a8a;letter-spacing:-0.05px">Blueprint Type: <span style="color:#d8d8d8">Normal</span></div><div class="t" style="left:53px;top:119.1px;font-size:4.3px;color:#8a8a8a;letter-spacing:-0.05px">Is Data Only: <span style="color:#d8d8d8">False</span></div><div class="t" style="left:53px;top:125.4px;font-size:4.3px;color:#8a8a8a;letter-spacing:-0.05px">Num Replicated Properties: <span style="color:#d8d8d8">0</span></div><div class="t" style="left:53px;top:131.7px;font-size:4.3px;color:#8a8a8a;letter-spacing:-0.05px">Native Components: <span style="color:#d8d8d8">0</span></div><div class="t" style="left:53px;top:138.0px;font-size:4.3px;color:#8a8a8a;letter-spacing:-0.05px">Blueprint Components: <span style="color:#d8d8d8">2</span></div>
    <div class="a" style="left:0;top:145px;width:182px;height:1px;background:#181818"></div>
    <div class="a" style="left:0;top:146px;width:182px;height:12px;background:#262626"></div>
    <div class="a" style="left:0;top:158px;width:182px;height:15px;background:linear-gradient(90deg,#2a2b45 0%,#2e2a48 35%,#4a2a48 50%,#5a2c45 58%,#3c2d56 75%,#2f2c58 100%)"></div>
    <div class="a" style="left:8px;top:161px;width:8px;height:8px;background:linear-gradient(135deg,#f0a040,#e040a0,#40a0f0)"></div>
    <div class="a" style="left:26px;top:161px;width:9px;height:8px;border-radius:50%;background:#5865f2"></div>
    <div class="a" style="left:44px;top:161px;width:8px;height:8px;background:linear-gradient(90deg,#e0a040,#4a80e0)"></div>
    <div class="a" style="left:60px;top:158px;width:18px;height:15px;background:rgba(255,255,255,.14)"></div>
    <div class="a" style="left:64px;top:161px;width:9px;height:9px;border-radius:50%;background:#eee;border:2px solid #111"></div>
  </div>

  <!-- scrollbar -->
  <div class="a" style="left:1596px;top:244px;width:8px;height:702px;border-radius:4px;background:#2b2d31"></div>
  <div class="a" style="left:1596px;top:914px;width:8px;height:32px;border-radius:4px;background:#1a1b1e"></div>

  <!-- INPUT -->
  <div class="a" style="left:16px;top:950px;width:1576px;height:44px;border-radius:8px;background:#383a40">
    <div class="a" style="left:18px;top:12px;width:20px;height:20px;border-radius:50%;background:#b5bac1"></div>
    <svg class="a" style="left:18px;top:12px" width="20" height="20" viewBox="0 0 20 20"><path d="M10 5v10M5 10h10" stroke="#383a40" stroke-width="2"/></svg>
    <div class="t" style="left:56.5px;top:13.5px;font-size:15.5px;color:#6d6f78;letter-spacing:-0.6px">Message @Aaron M</div>
    <svg class="a" style="left:1426px;top:11px" width="20" height="22" viewBox="0 0 20 22"><path d="M4.5 6.5C3 5 4 2.2 6 2.4c1.7.2 3.2 2.4 4 4.1.8-1.7 2.3-3.9 4-4.1 2-.2 3 2.6 1.5 4.1" fill="none" stroke="#b5bac1" stroke-width="1.8"/><rect x="0.5" y="6.8" width="19" height="4.2" rx="1" fill="#b5bac1"/><rect x="1.8" y="12" width="7.2" height="8.5" rx="1" fill="#b5bac1"/><rect x="11" y="12" width="7.2" height="8.5" rx="1" fill="#b5bac1"/></svg>
    <div class="a" style="left:1464px;top:12px;width:24px;height:20px;border-radius:3px;background:#b5bac1;color:#383a40;font-size:10.5px;font-weight:bold;text-align:center;line-height:20px;letter-spacing:-0.3px">GIF</div>
    <svg class="a" style="left:1504px;top:12px" width="20" height="20" viewBox="0 0 20 20"><path d="M2.5 0h9.5v3.5A4.5 4.5 0 0 0 16.5 8H20v9.5a2.5 2.5 0 0 1-2.5 2.5h-15A2.5 2.5 0 0 1 0 17.5v-15A2.5 2.5 0 0 1 2.5 0z" fill="#b5bac1"/><path d="M13.5 0.5L19.5 6.5H16a2.5 2.5 0 0 1-2.5-2.5z" fill="#b5bac1"/><path d="M7 13.5c1.5 1.6 4.5 1.6 6 0" stroke="#383a40" stroke-width="1.5" fill="none"/><circle cx="3.5" cy="13" r="0.9" fill="#383a40"/><circle cx="16.5" cy="13" r="0.9" fill="#383a40"/></svg>
    <svg class="a" style="left:1540px;top:11px" width="22" height="22" viewBox="0 0 22 22"><circle cx="11" cy="11" r="11" fill="#c9cacc"/><ellipse cx="7.3" cy="8" rx="1.5" ry="2" fill="#383a40"/><ellipse cx="14.7" cy="8" rx="1.5" ry="2" fill="#383a40"/><path d="M4.2 11.8h13.6c-.5 3.6-3.3 6-6.8 6s-6.3-2.4-6.8-6z" fill="#383a40"/><path d="M6.3 14.5h9.4c-1 1.6-2.7 2.3-4.7 2.3s-3.7-.7-4.7-2.3z" fill="#fff"/></svg>
  </div>

  <!-- CALL AREA -->
  <div id="call" class="a" style="left:0;top:0;width:1608px;height:240px;background:#111214;box-shadow:0 1px 3px rgba(0,0,0,.35)">
    <svg class="a" style="left:18px;top:14px" width="20" height="20" viewBox="0 0 20 20"><circle cx="10" cy="10" r="3.4" fill="none" stroke="#80848e" stroke-width="1.8"/><path d="M13.4 6.8v4.4c0 1.6 1 2.5 2.2 2.5s2.3-1 2.3-3.7A7.9 7.9 0 1 0 14 17" fill="none" stroke="#80848e" stroke-width="1.8" stroke-linecap="round"/></svg>
    <div class="t" style="left:48px;top:16.6px;font-size:14.7px;font-weight:bold;color:#f2f3f5;letter-spacing:-0.1px">Aaron M</div>
    <div class="a" style="left:116px;top:19.5px;width:10px;height:10px;border-radius:50%;background:#23a559"></div>
    <div class="a" style="left:142px;top:12px;width:1px;height:24px;background:#3f4147"></div>
    <div class="a" style="left:159px;top:16px;width:37px;height:16px;border-radius:8px;background:#2b2d31"></div>
    <div class="t" style="left:159px;top:19px;width:37px;text-align:center;font-size:11.2px;font-weight:bold;color:#b5bac1">AKA</div>
    <div class="t" style="left:204.7px;top:17.5px;font-size:14.2px;color:#b5bac1;letter-spacing:-0.65px">Aaaaaaaah Ron</div>

    <svg class="a" style="left:1250px;top:14px" width="20" height="20" viewBox="0 0 24 24"><path fill="#b5bac1" d="M19.38 11.38a3 3 0 0 0 4.24 0l.03-.03a.5.5 0 0 0 0-.7L13.35.35a.5.5 0 0 0-.7 0l-.03.03a3 3 0 0 0 0 4.24L13 5l-2.92 2.92-3.65-.34a2 2 0 0 0-1.6.58l-.62.63a1 1 0 0 0 0 1.42l9.58 9.58a1 1 0 0 0 1.42 0l.63-.63a2 2 0 0 0 .58-1.6l-.34-3.64L19 11l.38.38ZM9.07 17.07a.5.5 0 0 1-.08.77l-5.15 3.43a.5.5 0 0 1-.63-.06l-.42-.42a.5.5 0 0 1-.06-.63L6.16 15a.5.5 0 0 1 .77-.08l2.14 2.14Z"/></svg>
    <svg class="a" style="left:1289px;top:11px" width="24" height="22" viewBox="0 0 24 22"><circle cx="9" cy="9" r="4" fill="#b5bac1"/><path d="M1 21c0-4 3-6.5 8-6.5s8 2.5 8 6.5z" fill="#b5bac1"/><path d="M19.5 1v8M15.5 5h8" stroke="#b5bac1" stroke-width="2"/></svg>
    <svg class="a" style="left:1330px;top:14px" width="21" height="21" viewBox="0 0 21 21"><circle cx="10" cy="10" r="10" fill="#80848e"/><circle cx="10" cy="7" r="3.2" fill="#111214"/><path d="M4 16.5c.8-2.8 3.2-4.3 6-4.3s5.2 1.5 6 4.3" fill="#111214"/><circle cx="15.5" cy="15.5" r="5" fill="#111214"/><circle cx="15.5" cy="15.5" r="3.6" fill="#80848e"/></svg>
    <div class="a" style="left:1368px;top:12px;width:144px;height:24px;border-radius:4px;background:#1e1f22">
      <div class="t" style="left:6px;top:6px;font-size:13px;color:#949ba4">Search</div>
      <svg class="a" style="left:123px;top:5px" width="14" height="14" viewBox="0 0 14 14"><circle cx="5.8" cy="5.8" r="4.6" fill="none" stroke="#949ba4" stroke-width="1.5"/><path d="M9.2 9.2l4 4" stroke="#949ba4" stroke-width="1.6"/></svg>
    </div>
    <svg class="a" style="left:1531px;top:15px" width="18" height="18" viewBox="0 0 18 18"><path fill="#b5bac1" d="M2.5 0h13A2.5 2.5 0 0 1 18 2.5v13a2.5 2.5 0 0 1-2.5 2.5h-13A2.5 2.5 0 0 1 0 15.5v-13A2.5 2.5 0 0 1 2.5 0z"/><path fill="#111214" d="M2 2h14v8.5h-3.5c-.6 0-1 .5-1.2 1-.3.8-1.2 1.5-2.3 1.5s-2-.7-2.3-1.5c-.2-.5-.6-1-1.2-1H2z"/></svg>
    <svg class="a" style="left:1570px;top:14px" width="20" height="20" viewBox="0 0 20 20"><circle cx="10" cy="10" r="10" fill="#b5bac1"/><path d="M7 7.5a3 3 0 1 1 4.6 2.5c-1 .6-1.6 1.1-1.6 2.3" fill="none" stroke="#111214" stroke-width="2.2"/><circle cx="10" cy="15.6" r="1.4" fill="#111214"/></svg>
    <div class="t" style="left:1470.6px;top:48.7px;font-size:12px;color:#949ba4">region</div>
    <div class="t" style="left:1519px;top:48.7px;font-size:12px;font-weight:bold;color:#dbdee1;letter-spacing:-0.1px">Automatic</div>
    <svg class="a" style="left:1581px;top:50px" width="12" height="8" viewBox="0 0 12 8"><path d="M1.5 1.5L6 6l4.5-4.5" fill="none" stroke="#dbdee1" stroke-width="1.5"/></svg>

    <!-- avatars -->
    <div class="a" style="left:716px;top:67px;width:80px;height:80px;border-radius:50%;background:#23a559"></div>
    <div class="a" style="left:718.5px;top:69.5px;width:75px;height:75px;border-radius:50%;background:#111214"></div>
    <svg class="a" style="left:719px;top:70px;border-radius:50%" width="74" height="74"><use href="#av1"/></svg>
    <svg class="a" style="left:812px;top:67px;border-radius:50%" width="80" height="80"><use href="#av2"/></svg>

    <!-- buttons -->
    <div class="cbtn" style="left:632px;top:168px">
      <svg class="a" style="left:17px;top:19px" width="22" height="18" viewBox="0 0 22 18"><rect x="0.5" y="2.5" width="14.5" height="13" rx="2.6" fill="#f2f3f5"/><path d="M15.5 7.2l5-3v9.6l-5-3z" fill="#f2f3f5"/></svg>
    </div>
    <div class="a" style="left:665px;top:201px;width:26px;height:26px;border-radius:50%;background:#111214"></div>
    <div class="a" style="left:668px;top:204px;width:20px;height:20px;border-radius:50%;background:#2b2d31"><svg class="a" style="left:5px;top:6px" width="10" height="8" viewBox="0 0 10 8"><path d="M1.5 2l3.5 3.5L8.5 2" fill="none" stroke="#dbdee1" stroke-width="1.4"/></svg></div>
    <div class="cbtn" style="left:704px;top:168px">
      <svg class="a" style="left:17px;top:17px" width="22" height="22" viewBox="0 0 18 18"><path fill="#f2f3f5" d="M16.3 1.2c-3.2-.2-6 1.3-8 3.8L5.6 5.3 3.5 7.8l2.6.9-.6 1 2.9 2.9 1-.6.9 2.6 2.5-2.1.3-2.7c2.5-2 4-4.8 3.8-8 0-.4-.3-.6-.6-.6zM12 7.6a1.5 1.5 0 1 1 0-3 1.5 1.5 0 0 1 0 3z"/><path fill="#f2f3f5" d="M4.7 11.2c-1.3.5-2.3 2.5-2.7 5.2 2.7-.4 4.7-1.4 5.2-2.7z"/></svg>
    </div>
    <div class="cbtn" style="left:776px;top:168px">
      <svg class="a" style="left:18px;top:17px" width="21" height="20" viewBox="0 0 18 18"><rect x="0.5" y="0.5" width="17" height="13" rx="2" fill="#f2f3f5"/><path d="M9 13.5v3M5 17h8" stroke="#f2f3f5" stroke-width="1.5"/><path d="M5.2 10.5c.3-2.6 2-4 4.6-4V4.3l3.3 3.3-3.3 3.3V8.7c-1.9 0-3.4.6-4.6 1.8z" fill="#2b2d31"/></svg>
    </div>
    <div class="cbtn" style="left:848px;top:168px">
      <svg class="a" style="left:19px;top:17px" width="18" height="22" viewBox="0 0 16 20"><rect x="4.5" y="0.5" width="7" height="12" rx="3.5" fill="#f2f3f5"/><path d="M1.8 8.5a6.2 6.2 0 0 0 12.4 0" fill="none" stroke="#f2f3f5" stroke-width="1.8" stroke-linecap="round"/><path d="M8 14.8v4.5" stroke="#f2f3f5" stroke-width="1.8" stroke-linecap="round"/></svg>
    </div>
    <div class="a" style="left:881px;top:201px;width:26px;height:26px;border-radius:50%;background:#111214"></div>
    <div class="a" style="left:884px;top:204px;width:20px;height:20px;border-radius:50%;background:#2b2d31"><svg class="a" style="left:5px;top:6px" width="10" height="8" viewBox="0 0 10 8"><path d="M1.5 2l3.5 3.5L8.5 2" fill="none" stroke="#dbdee1" stroke-width="1.4"/></svg></div>
    <div class="cbtn" style="left:920px;top:168px;background:#ef4444">
      <svg class="a" style="left:0;top:0" width="56" height="56" viewBox="0 0 56 56"><path fill="#fff" d="M18 21h6v6h-1.6c0 3.4 2.3 5.6 5.6 5.6V31h7v7h-7c-6 0-10-4.5-10-10.5z"/><path d="M30 18.2l7.6 7.6M37.6 18.2L30 25.8" stroke="#fff" stroke-width="2.3"/></svg>
    </div>
    <svg class="a" style="left:18px;top:186px" width="21" height="21" viewBox="0 0 21 21"><path d="M6 20H3a1.5 1.5 0 0 1-1.5-1.5v-16A1.5 1.5 0 0 1 3 1h10a1.5 1.5 0 0 1 1.5 1.5V11" fill="none" stroke="#b5bac1" stroke-width="1.8"/><path d="M8.5 19.5c0-4.3 1.3-7 3.8-7h4.4c2.5 0 3.8 2.7 3.8 7 0 .8-.9 1-1.4.4l-1.5-1.8h-6.2l-1.5 1.8c-.5.6-1.4.4-1.4-.4z" fill="#b5bac1"/></svg>
  </div>
</div>
</body></html>
